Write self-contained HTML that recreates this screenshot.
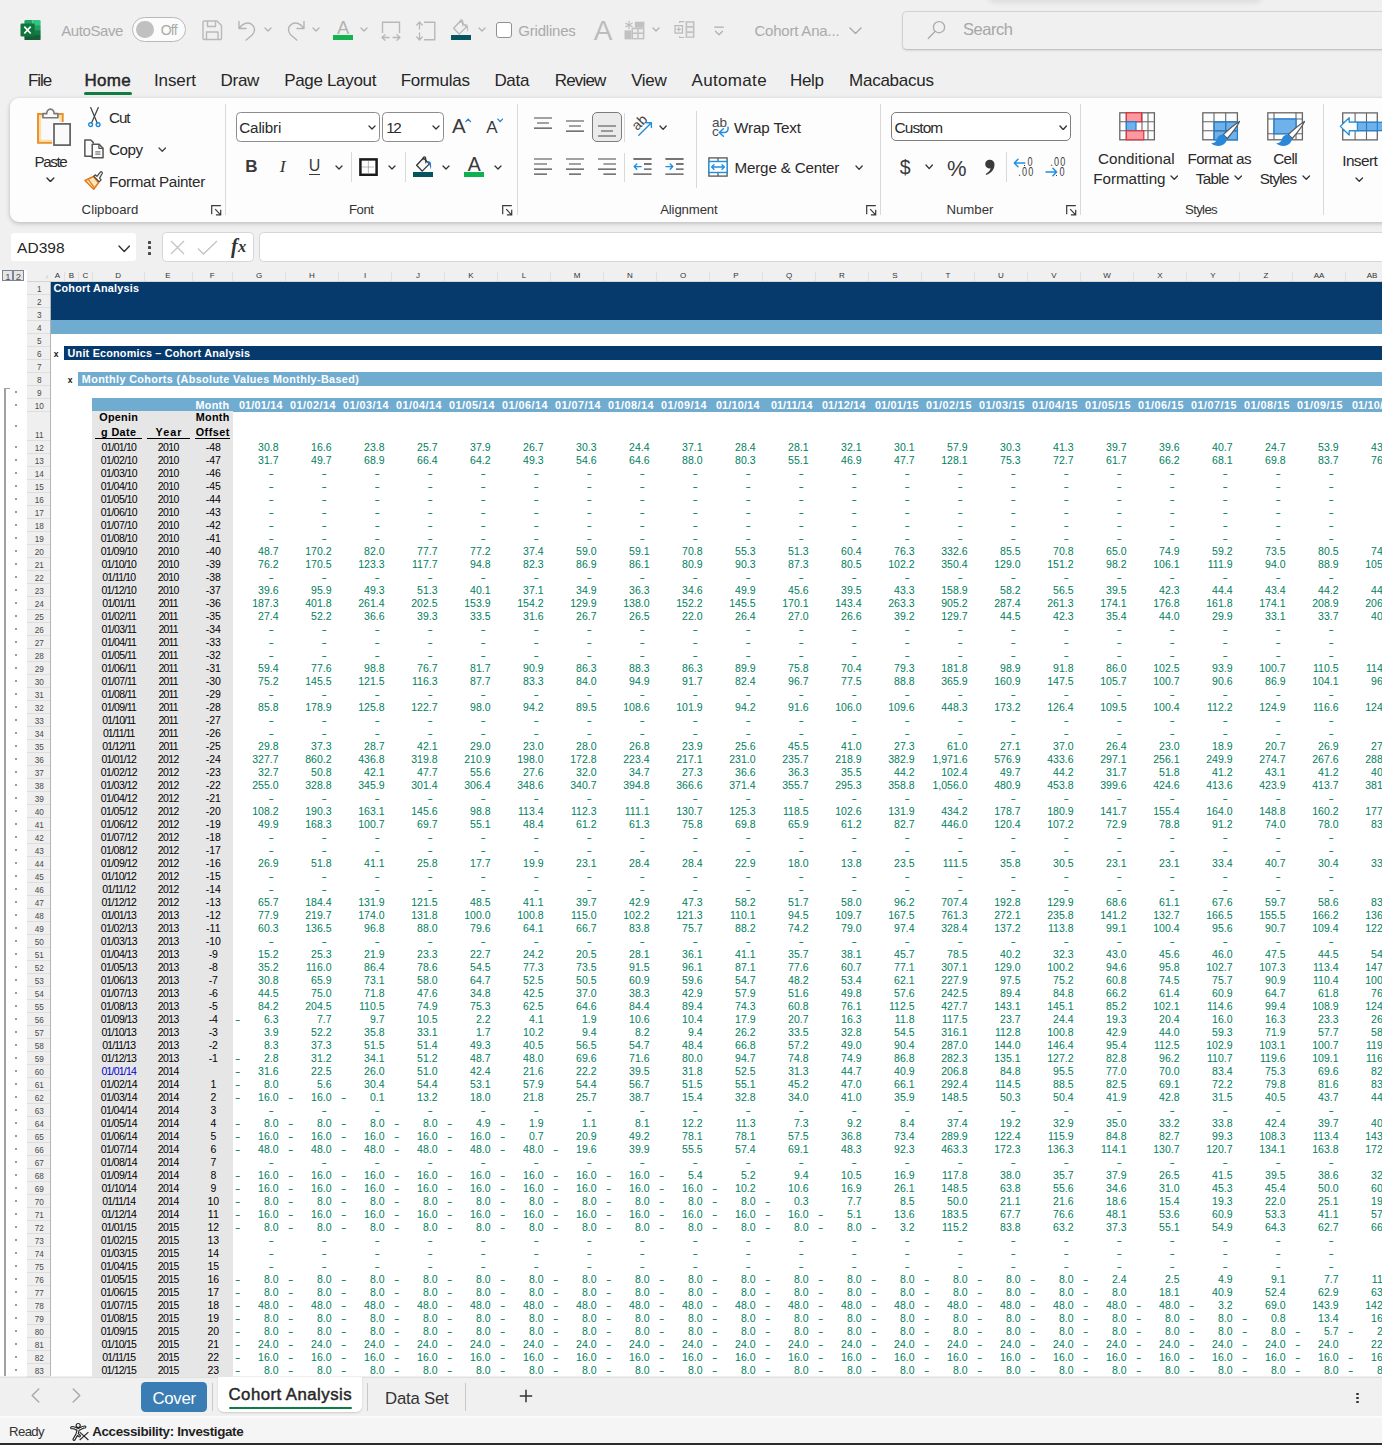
<!DOCTYPE html>
<html lang="en"><head><meta charset="utf-8"><title>Cohort Analysis - Excel</title>
<style>
html,body{margin:0;padding:0}
body{width:1382px;height:1445px;overflow:hidden;position:relative;background:#f0f0f0;font-family:'Liberation Sans',sans-serif;color:#242424}
body>span,body>div,body>svg{position:absolute;white-space:pre}
.g span,.g div,.g svg{position:absolute;white-space:pre}
.g{position:absolute;left:0;top:0}
.row{position:absolute;left:232.5px;height:13px;white-space:nowrap;font-size:10.5px;line-height:13px;color:#00805e}
.row b{display:inline-block;width:53px;box-sizing:border-box;padding-right:7px;text-align:right;font-weight:400;position:relative;vertical-align:top;height:13px}
.row b.d{padding-right:13px;transform:scaleX(1.55);transform-origin:38.3px 50%}
.row b i{position:absolute;left:2.6px;top:0;font-style:normal;transform:scaleX(1.55);transform-origin:0 50%}
.lab{position:absolute;height:13px;font-size:10.5px;line-height:13px;text-align:center;color:#000}
</style></head>
<body>
<div class="g" id="chrome">
<svg style="left:19.5px;top:19.8px;" width="21" height="20.2" viewBox="0 0 21 20.2"><path d="M4.4 1.3A1.3 1.3 0 0 1 5.7 0h6.8v5.1H4.4z" fill="#21a366"/><path d="M12.5 0h6.8a1.3 1.3 0 0 1 1.3 1.3v3.8h-8.1z" fill="#33c481"/><rect x="4.4" y="5.1" width="8.1" height="5" fill="#107c41"/><rect x="12.5" y="5.1" width="8.1" height="5" fill="#21a366"/><rect x="4.4" y="10.1" width="8.1" height="5" fill="#185c37"/><rect x="12.5" y="10.1" width="8.1" height="5" fill="#107c41"/><path d="M4.4 15.1h16.2v3.8a1.3 1.3 0 0 1-1.3 1.3H5.7a1.3 1.3 0 0 1-1.3-1.3z" fill="#185c37"/><rect x="0.5" y="3.5" width="14.2" height="13" rx="1.2" fill="#0e753c"/><path d="M4.3 6.7l6.4 6.8M10.7 6.7l-6.4 6.8" stroke="#fff" stroke-width="1.7" fill="none"/></svg>
<span style="left:61.30px;top:21.00px;font-size:15px;line-height:19px;color:#aaaaaa;letter-spacing:-0.435px;">AutoSave</span>
<div style="left:132.3px;top:17px;width:53.5px;height:24.5px;box-sizing:border-box;border:1.3px solid #b9b9b9;border-radius:12.5px;background:#fbfbfb"></div>
<div style="left:136.2px;top:21.1px;width:17.4px;height:17.4px;border-radius:50%;background:#c0c0c0"></div>
<span style="left:160.70px;top:21.00px;font-size:14px;line-height:18px;color:#aaaaaa;letter-spacing:-0.711px;">Off</span>
<svg style="left:202px;top:19.5px;" width="21" height="21" viewBox="0 0 21 21"><path d="M1 2.2A1.2 1.2 0 0 1 2.2 1H15l4.5 4.5V18.3a1.2 1.2 0 0 1-1.2 1.2H2.2A1.2 1.2 0 0 1 1 18.3z M5.5 1v5.5h8V1 M4.5 19.5v-7.5h11.5v7.5" fill="none" stroke="#b8b8b8" stroke-width="1.4" stroke-linejoin="round"/></svg>
<svg style="left:237px;top:19px;" width="20" height="22" viewBox="0 0 20 22"><path d="M2 2.5v7h7 M2.3 9.2C5 4.5 10.5 2.6 14.6 5.3c3.9 2.6 3.6 7.5 0.8 10.4L9.2 21" fill="none" stroke="#b4b4b4" stroke-width="1.4" stroke-linecap="round" stroke-linejoin="round"/></svg>
<svg style="left:264.4px;top:27.0px;" width="8" height="5" viewBox="0 0 8 5"><path d="M1 1 L4.0 4 L7 1" fill="none" stroke="#b0b0b0" stroke-width="1.2" stroke-linecap="round" stroke-linejoin="round"/></svg>
<svg style="left:286px;top:19px;" width="20" height="22" viewBox="0 0 20 22"><path d="M18 2.5v7h-7 M17.7 9.2C15 4.5 9.5 2.6 5.4 5.3c-3.9 2.6-3.6 7.5-0.8 10.4L10.8 21" fill="none" stroke="#b4b4b4" stroke-width="1.4" stroke-linecap="round" stroke-linejoin="round"/></svg>
<svg style="left:312.2px;top:27.0px;" width="8" height="5" viewBox="0 0 8 5"><path d="M1 1 L4.0 4 L7 1" fill="none" stroke="#b0b0b0" stroke-width="1.2" stroke-linecap="round" stroke-linejoin="round"/></svg>
<span style="left:337.03px;top:16.00px;font-size:18.5px;line-height:23px;color:#b2b2b2;">A</span>
<div style="left:333px;top:35px;width:20px;height:5px;background:#13b24c;"></div>
<svg style="left:360.3px;top:27.0px;" width="8" height="5" viewBox="0 0 8 5"><path d="M1 1 L4.0 4 L7 1" fill="none" stroke="#b0b0b0" stroke-width="1.2" stroke-linecap="round" stroke-linejoin="round"/></svg>
<svg style="left:381px;top:21px;" width="20" height="20" viewBox="0 0 20 20"><path d="M1.5 12V1.2h17V12" fill="none" stroke="#b8b8b8" stroke-width="1.4"/><path d="M1 16.5h7M12 16.5h7M4 13.8l-3 2.7 3 2.7M16 13.8l3 2.7-3 2.7" fill="none" stroke="#b8b8b8" stroke-width="1.3" stroke-linecap="round" stroke-linejoin="round"/></svg>
<svg style="left:416px;top:21px;" width="20" height="20" viewBox="0 0 20 20"><path d="M8 1.2h10.8v17.6H8" fill="none" stroke="#b8b8b8" stroke-width="1.4"/><path d="M3.5 1v7M3.5 12v7M0.8 4l2.7-3 2.7 3M0.8 16l2.7 3 2.7-3" fill="none" stroke="#b8b8b8" stroke-width="1.3" stroke-linecap="round" stroke-linejoin="round"/></svg>
<svg style="left:452.3px;top:18.8px;" width="20" height="16" viewBox="0 0 20 16"><path d="M1.65 9.3L7.2 15.1L14.4 7.9L8.4 2z" fill="none" stroke="#b6b6b6" stroke-width="1.3" stroke-linejoin="round"/><path d="M8 3.6C8 1.5 8.6 0.9 9.4 0.9S10.8 1.6 10.8 3.2V6.8" fill="none" stroke="#b6b6b6" stroke-width="1.2" stroke-linecap="round"/><path d="M12.5 5.7C14 4.8 15.6 5.4 15.9 7.5C16.2 9.5 16.3 11.5 16 13.6C15.3 11 14.6 9 14.2 8z" fill="#bcbcbc"/></svg>
<div style="left:450.7px;top:35px;width:20.3px;height:5px;background:#04555f;"></div>
<svg style="left:478.2px;top:27.0px;" width="8" height="5" viewBox="0 0 8 5"><path d="M1 1 L4.0 4 L7 1" fill="none" stroke="#b0b0b0" stroke-width="1.2" stroke-linecap="round" stroke-linejoin="round"/></svg>
<div style="left:496px;top:22px;width:16px;height:16px;box-sizing:border-box;border:1.3px solid #8f8f8f;border-radius:3px;background:#fff"></div>
<span style="left:518.30px;top:21.00px;font-size:15px;line-height:19px;color:#aaaaaa;letter-spacing:-0.211px;">Gridlines</span>
<span style="left:593.66px;top:14.00px;font-size:28px;line-height:33px;color:#bcbcbc;">A</span>
<svg style="left:623.5px;top:19.5px;" width="21" height="20" viewBox="0 0 21 20"><rect x="10.8" y="1.7" width="9.6" height="6" fill="#c1c1c1"/><rect x="0.5" y="10.4" width="7" height="9" fill="#c1c1c1"/><rect x="7.5" y="7.7" width="12.9" height="11.7" fill="#c1c1c1"/><path d="M9 9.2h4.2v3.4H9zM14.7 9.2h4.2v3.4h-4.2zM9 14.1h4.2v3.8H9zM14.7 14.1h4.2v3.8h-4.2z" fill="#ededed"/><path d="M5 0.8v8.4M1.4 2.9l7.2 4.2M8.6 2.9L1.4 7.1" stroke="#bababa" stroke-width="1.1" fill="none"/></svg>
<svg style="left:652.3px;top:27.0px;" width="8" height="5" viewBox="0 0 8 5"><path d="M1 1 L4.0 4 L7 1" fill="none" stroke="#b0b0b0" stroke-width="1.2" stroke-linecap="round" stroke-linejoin="round"/></svg>
<svg style="left:673.5px;top:21px;" width="21" height="18" viewBox="0 0 21 18"><rect x="11.5" y="0.2" width="9" height="16.6" fill="#c1c1c1"/><path d="M13.2 1.85h5.7v3.25h-5.7zM13.2 6.7h5.7v3.6h-5.7zM13.2 11.9h5.7v3.5h-5.7z" fill="#ededed"/><path d="M5.65 2V0.6H10.3M5.65 15.2v1.3H10.3" fill="none" stroke="#bababa" stroke-width="1.2"/><rect x="1.05" y="4.65" width="7.4" height="7.4" fill="#f0f0f0" stroke="#bababa" stroke-width="1.3"/><path d="M4.75 6.2v4.3M2.6 8.35h4.3" stroke="#bababa" stroke-width="1.2"/></svg>
<svg style="left:713.5px;top:25.5px;" width="10" height="11" viewBox="0 0 10 11"><path d="M0.8 1.2h8.4M1.5 5.2l3.5 3.6 3.5-3.6" fill="none" stroke="#b0b0b0" stroke-width="1.3" stroke-linecap="round" stroke-linejoin="round"/></svg>
<span style="left:754.40px;top:21.00px;font-size:15px;line-height:19px;color:#aaaaaa;letter-spacing:-0.197px;">Cohort Ana...</span>
<svg style="left:848.5px;top:26.75px;" width="13" height="7.5" viewBox="0 0 13 7.5"><path d="M1 1 L6.5 6.5 L12 1" fill="none" stroke="#a8a8a8" stroke-width="1.4" stroke-linecap="round" stroke-linejoin="round"/></svg>
<div style="left:990px;top:-8px;width:270px;height:8px;box-shadow:0 1px 7px rgba(0,0,0,.13)"></div>
<div style="left:902px;top:10.5px;width:520px;height:39px;box-sizing:border-box;border:1.3px solid #d2d2d2;border-bottom-color:#c4c4c4;border-radius:5px;background:#f0f0f0;box-shadow:0 1px 2px rgba(0,0,0,.10)"></div>
<svg style="left:927px;top:20px;" width="20" height="20" viewBox="0 0 20 20"><circle cx="12" cy="7.2" r="5.6" fill="none" stroke="#ababab" stroke-width="1.3"/><path d="M8 11.5L1.2 18.5" stroke="#ababab" stroke-width="1.3" stroke-linecap="round"/></svg>
<span style="left:963.00px;top:19.00px;font-size:16.5px;line-height:20px;color:#a6a6a6;letter-spacing:-0.456px;">Search</span>
<span style="left:27.90px;top:70.00px;font-size:17px;line-height:21px;color:#262626;letter-spacing:-1.035px;">File</span>
<span style="left:84.60px;top:70.00px;font-size:17px;line-height:21px;color:#262626;letter-spacing:0.247px;-webkit-text-stroke:0.45px #262626;">Home</span>
<span style="left:154.00px;top:70.00px;font-size:17px;line-height:21px;color:#262626;letter-spacing:-0.106px;">Insert</span>
<span style="left:220.40px;top:70.00px;font-size:17px;line-height:21px;color:#262626;letter-spacing:-0.224px;">Draw</span>
<span style="left:284.20px;top:70.00px;font-size:17px;line-height:21px;color:#262626;letter-spacing:-0.327px;">Page Layout</span>
<span style="left:400.70px;top:70.00px;font-size:17px;line-height:21px;color:#262626;letter-spacing:-0.223px;">Formulas</span>
<span style="left:494.40px;top:70.00px;font-size:17px;line-height:21px;color:#262626;letter-spacing:-0.307px;">Data</span>
<span style="left:554.70px;top:70.00px;font-size:17px;line-height:21px;color:#262626;letter-spacing:-0.81px;">Review</span>
<span style="left:631.20px;top:70.00px;font-size:17px;line-height:21px;color:#262626;letter-spacing:-0.349px;">View</span>
<span style="left:691.50px;top:70.00px;font-size:17px;line-height:21px;color:#262626;letter-spacing:0.333px;">Automate</span>
<span style="left:790.00px;top:70.00px;font-size:17px;line-height:21px;color:#262626;letter-spacing:-0.323px;">Help</span>
<span style="left:849.00px;top:70.00px;font-size:17px;line-height:21px;color:#262626;letter-spacing:-0.242px;">Macabacus</span>
<div style="left:84.4px;top:92px;width:47.6px;height:3px;border-radius:1.5px;background:#107c41"></div>
<div style="left:10px;top:98px;width:1400px;height:124px;background:#fdfdfd;border-radius:9px;box-shadow:0 1px 4px rgba(0,0,0,.18),0 3px 6px rgba(0,0,0,.06)"></div>
<div style="left:225.1px;top:104px;width:1px;height:111px;background:#d9d9d9;"></div>
<div style="left:517.3px;top:104px;width:1px;height:111px;background:#d9d9d9;"></div>
<div style="left:879.9px;top:104px;width:1px;height:111px;background:#d9d9d9;"></div>
<div style="left:1080.0px;top:104px;width:1px;height:111px;background:#d9d9d9;"></div>
<div style="left:1323.0px;top:104px;width:1px;height:111px;background:#d9d9d9;"></div>
<svg style="left:210.7px;top:204.5px;" width="11" height="11" viewBox="0 0 11 11"><path d="M0.7 9.2V0.7H9.8M4.2 4.2L9.6 9.8M9.7 4.8V9.9H4.9" fill="none" stroke="#3a3a3a" stroke-width="1.2"/></svg>
<svg style="left:502.3px;top:204.5px;" width="11" height="11" viewBox="0 0 11 11"><path d="M0.7 9.2V0.7H9.8M4.2 4.2L9.6 9.8M9.7 4.8V9.9H4.9" fill="none" stroke="#3a3a3a" stroke-width="1.2"/></svg>
<svg style="left:866.2px;top:204.5px;" width="11" height="11" viewBox="0 0 11 11"><path d="M0.7 9.2V0.7H9.8M4.2 4.2L9.6 9.8M9.7 4.8V9.9H4.9" fill="none" stroke="#3a3a3a" stroke-width="1.2"/></svg>
<svg style="left:1066px;top:204.5px;" width="11" height="11" viewBox="0 0 11 11"><path d="M0.7 9.2V0.7H9.8M4.2 4.2L9.6 9.8M9.7 4.8V9.9H4.9" fill="none" stroke="#3a3a3a" stroke-width="1.2"/></svg>
<span style="left:81.60px;top:201.00px;font-size:13.2px;line-height:17px;color:#333;letter-spacing:0.043px;">Clipboard</span>
<span style="left:349.00px;top:201.00px;font-size:13.2px;line-height:17px;color:#333;letter-spacing:-0.464px;">Font</span>
<span style="left:660.20px;top:201.00px;font-size:13.2px;line-height:17px;color:#333;letter-spacing:-0.145px;">Alignment</span>
<span style="left:946.40px;top:201.00px;font-size:13.2px;line-height:17px;color:#333;letter-spacing:0.019px;">Number</span>
<span style="left:1185.00px;top:201.00px;font-size:13.2px;line-height:17px;color:#333;letter-spacing:-0.644px;">Styles</span>
<svg style="left:35px;top:108px;" width="38" height="40" viewBox="0 0 38 40"><rect x="3.15" y="6.1" width="24.45" height="28.6" fill="#f9f9fb" stroke="#e8912d" stroke-width="2.2"/><rect x="5.2" y="8.15" width="20.35" height="24.5" fill="none" stroke="#fbdf9f" stroke-width="1.9"/><path d="M7.95 9.75V5.7H11.7C11.7 3.4 13.1 1.2 15.4 1.2S19.1 3.4 19.1 5.7H22.9V9.75z" fill="#fafafa" stroke="#7a7a7a" stroke-width="1.7" stroke-linejoin="round"/><rect x="19" y="15.9" width="16.1" height="21.2" fill="#fafafa" stroke="#fdfdfd" stroke-width="3.8"/><rect x="19" y="15.9" width="16.1" height="21.2" fill="#fafafa" stroke="#555" stroke-width="1.6"/></svg>
<span style="left:34.60px;top:152.00px;font-size:15.2px;line-height:19px;color:#2a2a2a;letter-spacing:-1.411px;">Paste</span>
<svg style="left:46.0px;top:176.6px;" width="8.8" height="5.6" viewBox="0 0 8.8 5.6"><path d="M1 1 L4.4 4.6 L7.8 1" fill="none" stroke="#3a3a3a" stroke-width="1.5" stroke-linecap="round" stroke-linejoin="round"/></svg>
<svg style="left:85.5px;top:107px;" width="17" height="21" viewBox="0 0 17 21"><path d="M4.7 0.6L11.2 16M12.3 0.6L5.5 16" stroke="#444" stroke-width="1.25" fill="none" stroke-linecap="round"/><circle cx="4.6" cy="17.6" r="1.9" fill="none" stroke="#1e8bdc" stroke-width="1.4"/><circle cx="12.1" cy="17.6" r="1.9" fill="none" stroke="#1e8bdc" stroke-width="1.4"/></svg>
<span style="left:109.00px;top:108.00px;font-size:15.2px;line-height:19px;color:#2a2a2a;letter-spacing:-1.02px;">Cut</span>
<svg style="left:83px;top:139px;" width="22" height="20" viewBox="0 0 22 20"><path d="M9 17.2H1.85V1.05H7.8L10.4 3.6V4.6" fill="#fbfbfb" stroke="#555" stroke-width="1.5" stroke-linejoin="round"/><path d="M9.25 5.15H15.9L20.05 9.3V18.85H9.25z" fill="#fbfbfb" stroke="#555" stroke-width="1.5" stroke-linejoin="round"/><path d="M15.9 5.15V9.3H20.05" fill="none" stroke="#555" stroke-width="1.3" stroke-linejoin="round"/><path d="M12.3 12.9h5.1M12.3 15.2h5.1" stroke="#777" stroke-width="1.3"/></svg>
<span style="left:109.00px;top:140.00px;font-size:15.2px;line-height:19px;color:#2a2a2a;letter-spacing:-0.423px;">Copy</span>
<svg style="left:157.75px;top:147.35px;" width="8.5" height="5.3" viewBox="0 0 8.5 5.3"><path d="M1 1 L4.25 4.3 L7.5 1" fill="none" stroke="#444" stroke-width="1.3" stroke-linecap="round" stroke-linejoin="round"/></svg>
<svg style="left:83.5px;top:171px;" width="21" height="19" viewBox="0 0 21 19"><path d="M1 9.5l8.5-4 5 6.2-4.8 6.5z" fill="#fbe6b8" stroke="#e07a1a" stroke-width="1.5" stroke-linejoin="round"/><path d="M4.3 8.3l6 8.3" stroke="#e07a1a" stroke-width="1.2"/><path d="M9.8 5.2l1.7-1.4 1.5 1.6 3.3-4.3c0.9-0.9 2.5 0.2 1.9 1.4l-2.6 4.6 1.5 1.8-1.9 1.9z" fill="#fafafa" stroke="#444" stroke-width="1.2" stroke-linejoin="round"/></svg>
<span style="left:109.00px;top:172.00px;font-size:15.2px;line-height:19px;color:#2a2a2a;letter-spacing:-0.327px;">Format Painter</span>
<div style="left:236.3px;top:112px;width:143.8px;height:30px;box-sizing:border-box;border:1.2px solid #8d8d8d;border-radius:4.5px;background:#fff"></div>
<span style="left:239.30px;top:118.00px;font-size:15.2px;line-height:19px;color:#2a2a2a;letter-spacing:-0.158px;">Calibri</span>
<svg style="left:368.0px;top:125.0px;" width="8" height="5" viewBox="0 0 8 5"><path d="M1 1 L4.0 4 L7 1" fill="none" stroke="#333" stroke-width="1.3" stroke-linecap="round" stroke-linejoin="round"/></svg>
<div style="left:382.2px;top:112px;width:61.4px;height:30px;box-sizing:border-box;border:1.2px solid #8d8d8d;border-radius:4.5px;background:#fff"></div>
<span style="left:386.20px;top:118.00px;font-size:15.2px;line-height:19px;color:#2a2a2a;letter-spacing:-1.306px;">12</span>
<svg style="left:432.0px;top:125.0px;" width="8" height="5" viewBox="0 0 8 5"><path d="M1 1 L4.0 4 L7 1" fill="none" stroke="#333" stroke-width="1.3" stroke-linecap="round" stroke-linejoin="round"/></svg>
<span style="left:451.96px;top:113.00px;font-size:20.5px;line-height:25px;color:#3a3a3a;">A</span>
<svg style="left:465.3px;top:118px;" width="6.4" height="4.6" viewBox="0 0 6.4 4.6"><path d="M0.9 3.6L3.2 1.1 5.5 3.6" fill="none" stroke="#1f7fd1" stroke-width="1.3" stroke-linecap="round" stroke-linejoin="round"/></svg>
<span style="left:486.13px;top:117.00px;font-size:17px;line-height:21px;color:#3a3a3a;">A</span>
<svg style="left:497.2px;top:118px;" width="6.4" height="4.6" viewBox="0 0 6.4 4.6"><path d="M0.9 1.1L3.2 3.6 5.5 1.1" fill="none" stroke="#1f7fd1" stroke-width="1.3" stroke-linecap="round" stroke-linejoin="round"/></svg>
<span style="left:245.36px;top:156.00px;font-size:17px;line-height:21px;font-weight:700;color:#3a3a3a;">B</span>
<span style="left:279.86px;top:155.00px;font-size:17.5px;line-height:22px;font-style:italic;color:#333;font-family:'Liberation Serif',serif;">I</span>
<span style="left:308.72px;top:156.00px;font-size:16px;line-height:19px;color:#3a3a3a;">U</span>
<div style="left:309px;top:173.6px;width:11px;height:1.2px;background:#3a3a3a;"></div>
<svg style="left:334.5px;top:165.0px;" width="8" height="5" viewBox="0 0 8 5"><path d="M1 1 L4.0 4 L7 1" fill="none" stroke="#333" stroke-width="1.3" stroke-linecap="round" stroke-linejoin="round"/></svg>
<div style="left:350.5px;top:152px;width:1px;height:29.5px;background:#d9d9d9;"></div>
<svg style="left:359px;top:157.5px;" width="19" height="18" viewBox="0 0 19 18"><rect x="1.4" y="1.4" width="16.2" height="15.4" fill="#fff" stroke="#1a1a1a" stroke-width="2.5"/><path d="M9.4 3.5v11M3.5 9h12" stroke="#777" stroke-width="1" stroke-dasharray="1 1"/></svg>
<svg style="left:388.0px;top:165.0px;" width="8" height="5" viewBox="0 0 8 5"><path d="M1 1 L4.0 4 L7 1" fill="none" stroke="#333" stroke-width="1.3" stroke-linecap="round" stroke-linejoin="round"/></svg>
<div style="left:404.7px;top:152px;width:1px;height:29.5px;background:#d9d9d9;"></div>
<svg style="left:414.5px;top:156px;" width="20" height="16" viewBox="0 0 20 16"><path d="M1.65 9.3L7.2 15.1L14.4 7.9L8.4 2z" fill="#f8f8f8" stroke="#333" stroke-width="1.3" stroke-linejoin="round"/><path d="M8 3.6C8 1.5 8.6 0.9 9.4 0.9S10.8 1.6 10.8 3.2V6.8" fill="none" stroke="#333" stroke-width="1.2" stroke-linecap="round"/><path d="M12.5 5.7C14 4.8 15.6 5.4 15.9 7.5C16.2 9.5 16.3 11.5 16 13.6C15.3 11 14.6 9 14.2 8z" fill="#1a73cf"/></svg>
<div style="left:413px;top:172.1px;width:20px;height:4.8px;background:#04555f;"></div>
<svg style="left:442.0px;top:165.0px;" width="8" height="5" viewBox="0 0 8 5"><path d="M1 1 L4.0 4 L7 1" fill="none" stroke="#333" stroke-width="1.3" stroke-linecap="round" stroke-linejoin="round"/></svg>
<span style="left:467.69px;top:152.00px;font-size:19.5px;line-height:24px;color:#3a3a3a;">A</span>
<div style="left:463.8px;top:172.1px;width:20.2px;height:4.8px;background:#0fb050;"></div>
<svg style="left:493.5px;top:165.0px;" width="8" height="5" viewBox="0 0 8 5"><path d="M1 1 L4.0 4 L7 1" fill="none" stroke="#333" stroke-width="1.3" stroke-linecap="round" stroke-linejoin="round"/></svg>
<svg style="left:533.8px;top:116.7px;" width="18" height="12.1" viewBox="0 0 18 12.1"><path d="M0.0 1.0h18M3.0 6.0h12M0.0 11.1h18" stroke="#484848" stroke-width="1.2" fill="none"/></svg>
<svg style="left:566.1px;top:120.2px;" width="18" height="12.1" viewBox="0 0 18 12.1"><path d="M0.0 1.0h18M3.0 6.0h12M0.0 11.1h18" stroke="#484848" stroke-width="1.2" fill="none"/></svg>
<div style="left:592.1px;top:112.2px;width:29.8px;height:29.5px;box-sizing:border-box;border:1.1px solid #7c7c7c;border-radius:5px;background:#ebebeb"></div>
<svg style="left:598.1px;top:125.3px;" width="18" height="12.0" viewBox="0 0 18 12.0"><path d="M0.0 1.0h18M3.0 6.0h12M0.0 11.0h18" stroke="#484848" stroke-width="1.2" fill="none"/></svg>
<div style="left:623.9px;top:112.6px;width:1px;height:29.099999999999994px;background:#d9d9d9;"></div>
<span style="left:631.51px;top:113.00px;font-size:14px;line-height:18px;color:#444;transform:rotate(-45deg);transform-origin:50% 55%;">ab</span>
<svg style="left:637px;top:121px;" width="16" height="16" viewBox="0 0 16 16"><path d="M1.8 14.3L14.4 1.7M9.6 1.7h4.8v4.8" fill="none" stroke="#1f8fe0" stroke-width="1.4" stroke-linecap="round" stroke-linejoin="round"/></svg>
<svg style="left:659.1999999999999px;top:124.7px;" width="8.2" height="5.4" viewBox="0 0 8.2 5.4"><path d="M1 1 L4.1 4.4 L7.2 1" fill="none" stroke="#333" stroke-width="1.3" stroke-linecap="round" stroke-linejoin="round"/></svg>
<div style="left:696.1px;top:111px;width:1px;height:77px;background:#d9d9d9;"></div>
<span style="left:711.90px;top:114.00px;font-size:13.5px;line-height:17px;color:#4a4a4a;">ab</span>
<span style="left:712.10px;top:123.00px;font-size:13.5px;line-height:17px;color:#4a4a4a;">c</span>
<svg style="left:718px;top:126px;" width="13" height="12" viewBox="0 0 13 12"><path d="M1.2 6.5H6.6C9.4 6.4 10.6 4.2 10 1.2M5.4 2.7L1.2 6.5l4.2 3.8" fill="none" stroke="#1f8fe0" stroke-width="1.5" stroke-linecap="round" stroke-linejoin="round"/></svg>
<span style="left:734.10px;top:118.00px;font-size:15.2px;line-height:19px;color:#2a2a2a;letter-spacing:-0.127px;">Wrap Text</span>
<svg style="left:533.8px;top:157.8px;" width="18" height="17.15" viewBox="0 0 18 17.15"><path d="M0.0 1.0h18M0.0 6.0h13M0.0 11.1h18M0.0 16.1h13" stroke="#484848" stroke-width="1.2" fill="none"/></svg>
<svg style="left:566.1px;top:157.8px;" width="18" height="17.15" viewBox="0 0 18 17.15"><path d="M0.0 1.0h18M3.0 6.0h12M0.0 11.1h18M3.0 16.1h12" stroke="#484848" stroke-width="1.2" fill="none"/></svg>
<svg style="left:598.1px;top:157.8px;" width="18" height="17.15" viewBox="0 0 18 17.15"><path d="M0.0 1.0h18M5.4 6.0h12.6M0.0 11.1h18M5.4 16.1h12.6" stroke="#484848" stroke-width="1.2" fill="none"/></svg>
<div style="left:623.9px;top:152.5px;width:1px;height:29.099999999999994px;background:#d9d9d9;"></div>
<svg style="left:632.5px;top:157.8px;" width="19" height="17" viewBox="0 0 19 17"><path d="M0.4 1h18.2M11 6h7.6M11 11.1h7.6M0.4 16.2h18.2" stroke="#484848" stroke-width="1.3" fill="none"/><path d="M8.2 8.6H1.2M3.8 6L1.2 8.6l2.6 2.6" fill="none" stroke="#1f8fe0" stroke-width="1.4" stroke-linecap="round" stroke-linejoin="round"/></svg>
<svg style="left:664.5px;top:157.8px;" width="19" height="17" viewBox="0 0 19 17"><path d="M0.4 1h18.2M11 6h7.6M11 11.1h7.6M0.4 16.2h18.2" stroke="#484848" stroke-width="1.3" fill="none"/><path d="M0.9 8.6H7.8M5.2 6L7.8 8.6 5.2 11.2" fill="none" stroke="#1f8fe0" stroke-width="1.4" stroke-linecap="round" stroke-linejoin="round"/></svg>
<svg style="left:708.4px;top:156.6px;" width="20" height="20" viewBox="0 0 20 20"><rect x="0.9" y="0.9" width="18.2" height="18.2" fill="#fdfdfd" stroke="#555" stroke-width="1.3"/><path d="M10 0.9v3.6M10 15.5v3.6" stroke="#555" stroke-width="1.2"/><rect x="0.9" y="4.5" width="18.2" height="11" fill="#fff" stroke="#1f8fe0" stroke-width="1.4"/><path d="M3.6 10h12.8M6 7.7L3.6 10 6 12.3M14 7.7l2.4 2.3-2.4 2.3" fill="none" stroke="#1f8fe0" stroke-width="1.4" stroke-linecap="round" stroke-linejoin="round"/></svg>
<span style="left:734.50px;top:158.00px;font-size:15.2px;line-height:19px;color:#2a2a2a;letter-spacing:-0.177px;">Merge &amp; Center</span>
<svg style="left:855.4px;top:164.9px;" width="8.2" height="5.4" viewBox="0 0 8.2 5.4"><path d="M1 1 L4.1 4.4 L7.2 1" fill="none" stroke="#333" stroke-width="1.3" stroke-linecap="round" stroke-linejoin="round"/></svg>
<div style="left:891.1px;top:111.9px;width:179.6px;height:29.6px;box-sizing:border-box;border:1.1px solid #7e7e7e;border-radius:5px;background:#fff"></div>
<span style="left:894.60px;top:118.00px;font-size:15.4px;line-height:19px;color:#2a2a2a;letter-spacing:-0.886px;">Custom</span>
<svg style="left:1059.0px;top:124.7px;" width="8.4" height="5.6" viewBox="0 0 8.4 5.6"><path d="M1 1 L4.2 4.6 L7.4 1" fill="none" stroke="#333" stroke-width="1.4" stroke-linecap="round" stroke-linejoin="round"/></svg>
<span style="left:899.87px;top:155.00px;font-size:19.5px;line-height:24px;color:#3a3a3a;">$</span>
<svg style="left:924.9px;top:164.39999999999998px;" width="8.4" height="5.6" viewBox="0 0 8.4 5.6"><path d="M1 1 L4.2 4.6 L7.4 1" fill="none" stroke="#333" stroke-width="1.3" stroke-linecap="round" stroke-linejoin="round"/></svg>
<span style="left:947.02px;top:155.00px;font-size:22px;line-height:27px;color:#3a3a3a;">%</span>
<svg style="left:984px;top:159px;" width="12" height="17" viewBox="0 0 12 17"><path d="M5.6 0.8a4.6 4.6 0 0 1 4.9 4.7c0 5-3.4 8.6-8.3 10.4l-0.5-1c3-1.6 4.6-3.6 4.9-5.6A4.3 4.3 0 0 1 1.2 5 4.3 4.3 0 0 1 5.6 0.8z" fill="#3a3a3a"/></svg>
<div style="left:1005.8px;top:152px;width:1px;height:29.69999999999999px;background:#d9d9d9;"></div>
<span style="left:1026.21px;top:154.00px;font-size:12px;line-height:16px;color:#3d3d3d;transform:scaleX(.76);transform-origin:100% 50%;">0</span>
<span style="left:1012.90px;top:164.00px;font-size:12px;line-height:16px;color:#3d3d3d;letter-spacing:1.656px;transform:scaleX(.76);transform-origin:100% 50%;">.00</span>
<div style="left:1023.9px;top:164.5px;width:1.3px;height:1.4px;background:#3d3d3d;"></div>
<svg style="left:1013.3px;top:157.8px;" width="13" height="10" viewBox="0 0 13 10"><path d="M11.8 5H1.3M5 1.3L1.3 5l3.7 3.7" fill="none" stroke="#1f8fe0" stroke-width="1.5" stroke-linecap="round" stroke-linejoin="round"/></svg>
<span style="left:1045.00px;top:154.00px;font-size:12px;line-height:16px;color:#3d3d3d;letter-spacing:1.656px;transform:scaleX(.76);transform-origin:100% 50%;">.00</span>
<span style="left:1058.31px;top:164.00px;font-size:12px;line-height:16px;color:#3d3d3d;transform:scaleX(.76);transform-origin:100% 50%;">0</span>
<div style="left:1056px;top:174.5px;width:1.3px;height:1.4px;background:#3d3d3d;"></div>
<svg style="left:1045.2px;top:166.5px;" width="13" height="10" viewBox="0 0 13 10"><path d="M1 5h10.6M7.9 1.3L11.6 5l-3.7 3.7" fill="none" stroke="#1f8fe0" stroke-width="1.5" stroke-linecap="round" stroke-linejoin="round"/></svg>
<svg style="left:1119px;top:111.5px;" width="36.5" height="29" viewBox="0 0 36.5 29"><rect x="0.8" y="0.8" width="34.6" height="27" fill="#fdfdfd" stroke="#666" stroke-width="1.3"/><path d="M0.8 9.8h34.6M0.8 18.8h34.6M7.3 0.8v27M23 0.8v27M29 0.8v27" stroke="#666" stroke-width="1.1"/><rect x="7.3" y="0.8" width="15.2" height="9" fill="#f99aa3" stroke="#e0303a" stroke-width="1.2"/><rect x="7.3" y="9.8" width="9.7" height="9" fill="#6fb1e8" stroke="#1f7fd1" stroke-width="1.2"/><rect x="7.3" y="18.8" width="17.5" height="9" fill="#f99aa3" stroke="#e0303a" stroke-width="1.2"/></svg>
<span style="left:1098.00px;top:149.00px;font-size:15.2px;line-height:19px;color:#2a2a2a;letter-spacing:0.06px;">Conditional</span>
<span style="left:1093.30px;top:169.00px;font-size:15.2px;line-height:19px;color:#2a2a2a;letter-spacing:-0.044px;">Formatting</span>
<svg style="left:1169.95px;top:175.35px;" width="8.5" height="5.3" viewBox="0 0 8.5 5.3"><path d="M1 1 L4.25 4.3 L7.5 1" fill="none" stroke="#333" stroke-width="1.3" stroke-linecap="round" stroke-linejoin="round"/></svg>
<svg style="left:1202px;top:111.5px;" width="38" height="36" viewBox="0 0 38 36"><rect x="0.8" y="0.8" width="34.6" height="27" fill="#fdfdfd" stroke="#666" stroke-width="1.3"/><rect x="12" y="9.8" width="23.4" height="18" fill="#6fb1e8"/><path d="M0.8 9.8h34.6M0.8 18.8h34.6M12 0.8v27M23.7 0.8v27" stroke="#666" stroke-width="1.1"/><path d="M12 9.8h23.4v18H12z M12 18.8h23.4M23.7 9.8v18" fill="none" stroke="#1f7fd1" stroke-width="1.2"/><path d="M37.6 9.4C33 12 25.5 18.5 21.3 22.7L25.3 26.5C29.5 21.5 35 14.5 37.6 9.4z" fill="#fdfdfd" stroke="#555" stroke-width="1.2" stroke-linejoin="round"/><path d="M21.1 22.8C17 22.4 15.5 25 14.8 27.5C14 30 12 31.2 9.2 31.2C13 34.9 20.5 34.9 23.6 30.5C24.6 29 25.3 27.8 25.3 26.6z" fill="#2b88d8"/></svg>
<span style="left:1187.40px;top:149.00px;font-size:15.2px;line-height:19px;color:#2a2a2a;letter-spacing:-0.532px;">Format as</span>
<span style="left:1195.80px;top:169.00px;font-size:15.2px;line-height:19px;color:#2a2a2a;letter-spacing:-0.678px;">Table</span>
<svg style="left:1233.75px;top:175.35px;" width="8.5" height="5.3" viewBox="0 0 8.5 5.3"><path d="M1 1 L4.25 4.3 L7.5 1" fill="none" stroke="#333" stroke-width="1.3" stroke-linecap="round" stroke-linejoin="round"/></svg>
<svg style="left:1267px;top:111.5px;" width="38" height="36" viewBox="0 0 38 36"><rect x="0.8" y="0.8" width="34.6" height="27" fill="#fdfdfd" stroke="#666" stroke-width="1.3"/><path d="M0.8 7h34.6M0.8 21.8h34.6M7 0.8v27M29 0.8v27" stroke="#666" stroke-width="1.1"/><rect x="7" y="7" width="22" height="14.8" fill="#6fb1e8" stroke="#1f7fd1" stroke-width="1.3"/><path d="M37.6 9.4C33 12 25.5 18.5 21.3 22.7L25.3 26.5C29.5 21.5 35 14.5 37.6 9.4z" fill="#fdfdfd" stroke="#555" stroke-width="1.2" stroke-linejoin="round"/><path d="M21.1 22.8C17 22.4 15.5 25 14.8 27.5C14 30 12 31.2 9.2 31.2C13 34.9 20.5 34.9 23.6 30.5C24.6 29 25.3 27.8 25.3 26.6z" fill="#2b88d8"/></svg>
<span style="left:1273.20px;top:149.00px;font-size:15.2px;line-height:19px;color:#2a2a2a;letter-spacing:-0.557px;">Cell</span>
<span style="left:1259.70px;top:169.00px;font-size:15.2px;line-height:19px;color:#2a2a2a;letter-spacing:-0.812px;">Styles</span>
<svg style="left:1301.55px;top:175.35px;" width="8.5" height="5.3" viewBox="0 0 8.5 5.3"><path d="M1 1 L4.25 4.3 L7.5 1" fill="none" stroke="#333" stroke-width="1.3" stroke-linecap="round" stroke-linejoin="round"/></svg>
<svg style="left:1339px;top:111.5px;" width="44" height="29" viewBox="0 0 44 29"><rect x="3.7" y="0.9" width="34.6" height="27" fill="#fdfdfd" stroke="#666" stroke-width="1.3"/><path d="M3.7 10.2h34.6M3.7 18.7h34.6M16.1 0.9v27M27.5 0.9v27" stroke="#666" stroke-width="1.1"/><rect x="17.8" y="10.2" width="27" height="8.5" fill="#6fb1e8" stroke="#1f7fd1" stroke-width="1.2"/><path d="M27.5 10.2v8.5M38.3 10.2v8.5" stroke="#1f7fd1" stroke-width="1.1"/><path d="M1.3 14.4L10.2 5.8V10.2H18.4V18.7H10.2V23z" fill="#fdfdfd" stroke="#1f8fe0" stroke-width="1.3" stroke-linejoin="round"/></svg>
<span style="left:1342.20px;top:151.00px;font-size:15.4px;line-height:19px;color:#2a2a2a;letter-spacing:-0.58px;">Insert</span>
<svg style="left:1355.15px;top:176.85px;" width="8.5" height="5.3" viewBox="0 0 8.5 5.3"><path d="M1 1 L4.25 4.3 L7.5 1" fill="none" stroke="#333" stroke-width="1.3" stroke-linecap="round" stroke-linejoin="round"/></svg>
<div style="left:10.9px;top:232.8px;width:125.4px;height:27.8px;background:#fff;border-radius:3px;"></div>
<span style="left:17.00px;top:238.00px;font-size:15.5px;line-height:19px;color:#262626;letter-spacing:0.073px;">AD398</span>
<svg style="left:117.55px;top:245.0px;" width="12.5" height="7.6" viewBox="0 0 12.5 7.6"><path d="M1 1 L6.25 6.6 L11.5 1" fill="none" stroke="#333" stroke-width="1.4" stroke-linecap="round" stroke-linejoin="round"/></svg>
<div style="left:147.9px;top:240.8px;width:3px;height:3px;background:#4a4a4a;border-radius:0.6px;"></div>
<div style="left:147.9px;top:246.3px;width:3px;height:3px;background:#4a4a4a;border-radius:0.6px;"></div>
<div style="left:147.9px;top:251.8px;width:3px;height:3px;background:#4a4a4a;border-radius:0.6px;"></div>
<div style="left:162.3px;top:232px;width:91.4px;height:29.8px;box-sizing:border-box;border:1px solid #d6d6d6;border-radius:4.5px;background:#fff"></div>
<svg style="left:170px;top:239.5px;" width="15" height="15" viewBox="0 0 15 15"><path d="M1 1l13 13M14 1L1 14" stroke="#c3c3c3" stroke-width="1.3" fill="none"/></svg>
<svg style="left:197px;top:240px;" width="21" height="15" viewBox="0 0 21 15"><path d="M1 8.5l5.5 5.5L20 1" stroke="#c3c3c3" stroke-width="1.3" fill="none"/></svg>
<span style="left:230.96px;top:234.00px;font-size:20px;line-height:24px;font-weight:700;font-style:italic;color:#333;font-family:'Liberation Serif',serif;">f</span>
<span style="left:238.01px;top:237.00px;font-size:16.5px;line-height:20px;font-weight:700;font-style:italic;color:#333;font-family:'Liberation Serif',serif;">x</span>
<div style="left:259.4px;top:232px;width:1140px;height:29.8px;box-sizing:border-box;border:1px solid #d6d6d6;border-radius:4.5px;background:#fff"></div>
<div style="left:0px;top:1376.5px;width:1382px;height:40.3px;background:#f0f0f0;"></div>
<div style="left:0px;top:1376.5px;width:1382px;height:0.8px;background:#e0e0e0;"></div>
<svg style="left:31px;top:1388px;" width="9" height="15" viewBox="0 0 9 15"><path d="M7.8 1L1.2 7.5l6.6 6.5" fill="none" stroke="#a8a8a8" stroke-width="1.4" stroke-linecap="round" stroke-linejoin="round"/></svg>
<svg style="left:71.5px;top:1388px;" width="9" height="15" viewBox="0 0 9 15"><path d="M1.2 1l6.6 6.5L1.2 14" fill="none" stroke="#a8a8a8" stroke-width="1.4" stroke-linecap="round" stroke-linejoin="round"/></svg>
<div style="left:140.8px;top:1382.2px;width:66px;height:29.4px;border-radius:4.5px;background:#3a7db5"></div>
<span style="left:152.50px;top:1388.00px;font-size:16.8px;line-height:21px;color:#fff;letter-spacing:-0.316px;">Cover</span>
<div style="left:212.3px;top:1383px;width:1px;height:28px;background:#c8c8c8;"></div>
<div style="left:217.8px;top:1377.2px;width:144.4px;height:34.4px;border-radius:0 0 6px 6px;background:#fff;box-shadow:0 1px 2px rgba(0,0,0,.15)"></div>
<span style="left:228.50px;top:1384.00px;font-size:16.8px;line-height:21px;color:#262626;letter-spacing:0.465px;-webkit-text-stroke:0.45px #262626;">Cohort Analysis</span>
<div style="left:228.5px;top:1406.5px;width:123.1px;height:2.2px;background:#107c41;border-radius:1px;"></div>
<div style="left:366.8px;top:1383px;width:1px;height:28px;background:#c8c8c8;"></div>
<span style="left:385.00px;top:1388.00px;font-size:16.8px;line-height:21px;color:#333;letter-spacing:-0.216px;">Data Set</span>
<div style="left:464.5px;top:1383px;width:1px;height:28px;background:#c8c8c8;"></div>
<svg style="left:518.5px;top:1388.5px;" width="14" height="14" viewBox="0 0 14 14"><path d="M7 0.8v12.4M0.8 7h12.4" stroke="#333" stroke-width="1.5" fill="none"/></svg>
<div style="left:1356.3px;top:1392.5px;width:2.4px;height:2.4px;background:#333;border-radius:50%;"></div>
<div style="left:1356.3px;top:1396.8px;width:2.4px;height:2.4px;background:#333;border-radius:50%;"></div>
<div style="left:1356.3px;top:1401.1px;width:2.4px;height:2.4px;background:#333;border-radius:50%;"></div>
<div style="left:0px;top:1417px;width:1382px;height:28px;background:#f5f5f5;"></div>
<div style="left:0px;top:1416.4px;width:1382px;height:1.4px;background:#fbfbfb;"></div>
<span style="left:9.10px;top:1423.00px;font-size:13.2px;line-height:17px;color:#333;letter-spacing:-0.656px;">Ready</span>
<svg style="left:69.5px;top:1421.5px;" width="20" height="20" viewBox="0 0 20 20"><path d="M1.7 5.7C3.6 5.1 6 6.6 8.2 7.7C10.5 6.6 13 4.7 14.8 5M8.2 7.7L7.1 12L4.1 17.3M7.1 12L9.3 13.7" fill="none" stroke="#262626" stroke-width="3.2" stroke-linecap="round" stroke-linejoin="round"/><circle cx="8.2" cy="3.5" r="2.6" fill="#262626"/><path d="M1.7 5.7C3.6 5.1 6 6.6 8.2 7.7C10.5 6.6 13 4.7 14.8 5M8.2 7.7L7.1 12L4.1 17.3M7.1 12L9.3 13.7" fill="none" stroke="#f5f5f5" stroke-width="1" stroke-linecap="round" stroke-linejoin="round"/><circle cx="8.2" cy="3.5" r="1.4" fill="#f5f5f5"/><path d="M9.7 10.1L18.4 18M18.4 10.1L9.7 18" stroke="#262626" stroke-width="1.1" fill="none"/></svg>
<span style="left:92.20px;top:1423.00px;font-size:13.4px;line-height:17px;font-weight:700;color:#1f1f1f;letter-spacing:-0.341px;">Accessibility: Investigate</span>
<div style="left:0px;top:1443.4px;width:1382px;height:1.6px;background:#2e2a2a;"></div>
</div>
<div class="g" id="sheet">
<div style="left:50.5px;top:281.8px;width:1331.5px;height:1094.7px;background:#fff;"></div>
<div style="left:0px;top:269.6px;width:27.1px;height:1106.9px;background:#fff;"></div>
<div style="left:27.3px;top:281.8px;width:23.2px;height:1094.7px;background:#efefef;"></div>
<div style="left:49.9px;top:281.8px;width:1px;height:1094.7px;background:#b4b4b4;"></div>
<div style="left:27.3px;top:281.3px;width:1354.7px;height:0.8px;background:#d4d4d4;"></div>
<div style="left:2px;top:270.2px;width:11.2px;height:10.6px;box-sizing:border-box;border:1px solid #7d8595;background:#e6e6e6"></div>
<div style="left:12.6px;top:270.2px;width:11.2px;height:10.6px;box-sizing:border-box;border:1px solid #7d8595;background:#e6e6e6"></div>
<span style="left:5.15px;top:270.00px;font-size:9.5px;line-height:13px;color:#555;">1</span>
<span style="left:15.75px;top:270.00px;font-size:9.5px;line-height:13px;color:#555;">2</span>
<svg style="left:43.5px;top:274.2px;" width="5" height="5" viewBox="0 0 5 5"><path d="M4.2 0.3 L4.2 4.2 L0.3 4.2 Z" fill="#dedede"/></svg>
<span style="left:54.83px;top:270.00px;font-size:8px;line-height:11px;color:#333;">A</span>
<div style="left:64.1px;top:271.5px;width:0.8px;height:9.5px;background:#e0e0e0;"></div>
<span style="left:68.83px;top:270.00px;font-size:8px;line-height:11px;color:#333;">B</span>
<div style="left:78.1px;top:271.5px;width:0.8px;height:9.5px;background:#e0e0e0;"></div>
<span style="left:82.61px;top:270.00px;font-size:8px;line-height:11px;color:#333;">C</span>
<div style="left:92.1px;top:271.5px;width:0.8px;height:9.5px;background:#e0e0e0;"></div>
<span style="left:115.36px;top:270.00px;font-size:8px;line-height:11px;color:#333;">D</span>
<div style="left:143.6px;top:271.5px;width:0.8px;height:9.5px;background:#e0e0e0;"></div>
<span style="left:165.33px;top:270.00px;font-size:8px;line-height:11px;color:#333;">E</span>
<div style="left:191.6px;top:271.5px;width:0.8px;height:9.5px;background:#e0e0e0;"></div>
<span style="left:209.80px;top:270.00px;font-size:8px;line-height:11px;color:#333;">F</span>
<div style="left:232.1px;top:271.5px;width:0.8px;height:9.5px;background:#e0e0e0;"></div>
<span style="left:255.88px;top:270.00px;font-size:8px;line-height:11px;color:#333;">G</span>
<div style="left:285.1px;top:271.5px;width:0.8px;height:9.5px;background:#e0e0e0;"></div>
<span style="left:309.11px;top:270.00px;font-size:8px;line-height:11px;color:#333;">H</span>
<div style="left:338.1px;top:271.5px;width:0.8px;height:9.5px;background:#e0e0e0;"></div>
<span style="left:363.88px;top:270.00px;font-size:8px;line-height:11px;color:#333;">I</span>
<div style="left:391.1px;top:271.5px;width:0.8px;height:9.5px;background:#e0e0e0;"></div>
<span style="left:416.00px;top:270.00px;font-size:8px;line-height:11px;color:#333;">J</span>
<div style="left:444.1px;top:271.5px;width:0.8px;height:9.5px;background:#e0e0e0;"></div>
<span style="left:468.33px;top:270.00px;font-size:8px;line-height:11px;color:#333;">K</span>
<div style="left:497.1px;top:271.5px;width:0.8px;height:9.5px;background:#e0e0e0;"></div>
<span style="left:521.77px;top:270.00px;font-size:8px;line-height:11px;color:#333;">L</span>
<div style="left:550.1px;top:271.5px;width:0.8px;height:9.5px;background:#e0e0e0;"></div>
<span style="left:573.66px;top:270.00px;font-size:8px;line-height:11px;color:#333;">M</span>
<div style="left:603.1px;top:271.5px;width:0.8px;height:9.5px;background:#e0e0e0;"></div>
<span style="left:627.11px;top:270.00px;font-size:8px;line-height:11px;color:#333;">N</span>
<div style="left:656.1px;top:271.5px;width:0.8px;height:9.5px;background:#e0e0e0;"></div>
<span style="left:679.88px;top:270.00px;font-size:8px;line-height:11px;color:#333;">O</span>
<div style="left:709.1px;top:271.5px;width:0.8px;height:9.5px;background:#e0e0e0;"></div>
<span style="left:733.33px;top:270.00px;font-size:8px;line-height:11px;color:#333;">P</span>
<div style="left:762.1px;top:271.5px;width:0.8px;height:9.5px;background:#e0e0e0;"></div>
<span style="left:785.88px;top:270.00px;font-size:8px;line-height:11px;color:#333;">Q</span>
<div style="left:815.1px;top:271.5px;width:0.8px;height:9.5px;background:#e0e0e0;"></div>
<span style="left:839.11px;top:270.00px;font-size:8px;line-height:11px;color:#333;">R</span>
<div style="left:868.1px;top:271.5px;width:0.8px;height:9.5px;background:#e0e0e0;"></div>
<span style="left:892.33px;top:270.00px;font-size:8px;line-height:11px;color:#333;">S</span>
<div style="left:921.1px;top:271.5px;width:0.8px;height:9.5px;background:#e0e0e0;"></div>
<span style="left:945.55px;top:270.00px;font-size:8px;line-height:11px;color:#333;">T</span>
<div style="left:974.1px;top:271.5px;width:0.8px;height:9.5px;background:#e0e0e0;"></div>
<span style="left:998.11px;top:270.00px;font-size:8px;line-height:11px;color:#333;">U</span>
<div style="left:1027.1px;top:271.5px;width:0.8px;height:9.5px;background:#e0e0e0;"></div>
<span style="left:1051.33px;top:270.00px;font-size:8px;line-height:11px;color:#333;">V</span>
<div style="left:1080.1px;top:271.5px;width:0.8px;height:9.5px;background:#e0e0e0;"></div>
<span style="left:1103.22px;top:270.00px;font-size:8px;line-height:11px;color:#333;">W</span>
<div style="left:1133.1px;top:271.5px;width:0.8px;height:9.5px;background:#e0e0e0;"></div>
<span style="left:1157.33px;top:270.00px;font-size:8px;line-height:11px;color:#333;">X</span>
<div style="left:1186.1px;top:271.5px;width:0.8px;height:9.5px;background:#e0e0e0;"></div>
<span style="left:1210.33px;top:270.00px;font-size:8px;line-height:11px;color:#333;">Y</span>
<div style="left:1239.1px;top:271.5px;width:0.8px;height:9.5px;background:#e0e0e0;"></div>
<span style="left:1263.55px;top:270.00px;font-size:8px;line-height:11px;color:#333;">Z</span>
<div style="left:1292.1px;top:271.5px;width:0.8px;height:9.5px;background:#e0e0e0;"></div>
<span style="left:1313.66px;top:270.00px;font-size:8px;line-height:11px;color:#333;">AA</span>
<div style="left:1345.1px;top:271.5px;width:0.8px;height:9.5px;background:#e0e0e0;"></div>
<span style="left:1366.66px;top:270.00px;font-size:8px;line-height:11px;color:#333;">AB</span>
<span style="left:37.02px;top:284.00px;font-size:8.2px;line-height:11px;color:#4a4a4a;">1</span>
<div style="left:27.3px;top:294.40000000000003px;width:23px;height:0.8px;background:#dedede;"></div>
<span style="left:37.02px;top:297.00px;font-size:8.2px;line-height:11px;color:#4a4a4a;">2</span>
<div style="left:27.3px;top:307.3px;width:23px;height:0.8px;background:#dedede;"></div>
<span style="left:37.02px;top:310.00px;font-size:8.2px;line-height:11px;color:#4a4a4a;">3</span>
<div style="left:27.3px;top:320.1px;width:23px;height:0.8px;background:#dedede;"></div>
<span style="left:37.02px;top:323.00px;font-size:8.2px;line-height:11px;color:#4a4a4a;">4</span>
<div style="left:27.3px;top:333.20000000000005px;width:23px;height:0.8px;background:#dedede;"></div>
<span style="left:37.02px;top:336.00px;font-size:8.2px;line-height:11px;color:#4a4a4a;">5</span>
<div style="left:27.3px;top:346.1px;width:23px;height:0.8px;background:#dedede;"></div>
<span style="left:37.02px;top:349.00px;font-size:8.2px;line-height:11px;color:#4a4a4a;">6</span>
<div style="left:27.3px;top:359.20000000000005px;width:23px;height:0.8px;background:#dedede;"></div>
<span style="left:37.02px;top:362.00px;font-size:8.2px;line-height:11px;color:#4a4a4a;">7</span>
<div style="left:27.3px;top:372.1px;width:23px;height:0.8px;background:#dedede;"></div>
<span style="left:37.02px;top:375.00px;font-size:8.2px;line-height:11px;color:#4a4a4a;">8</span>
<div style="left:27.3px;top:385.20000000000005px;width:23px;height:0.8px;background:#dedede;"></div>
<span style="left:37.02px;top:388.00px;font-size:8.2px;line-height:11px;color:#4a4a4a;">9</span>
<div style="left:27.3px;top:398.1px;width:23px;height:0.8px;background:#dedede;"></div>
<span style="left:34.75px;top:401.00px;font-size:8.2px;line-height:11px;color:#4a4a4a;">10</span>
<div style="left:27.3px;top:411.20000000000005px;width:23px;height:0.8px;background:#dedede;"></div>
<span style="left:35.05px;top:430.00px;font-size:8.2px;line-height:11px;color:#4a4a4a;">11</span>
<div style="left:27.3px;top:440.1px;width:23px;height:0.8px;background:#dedede;"></div>
<span style="left:34.75px;top:443.00px;font-size:8.2px;line-height:11px;color:#4a4a4a;">12</span>
<div style="left:27.3px;top:453.1px;width:23px;height:0.8px;background:#dedede;"></div>
<span style="left:34.75px;top:456.00px;font-size:8.2px;line-height:11px;color:#4a4a4a;">13</span>
<div style="left:27.3px;top:466.1px;width:23px;height:0.8px;background:#dedede;"></div>
<span style="left:34.75px;top:469.00px;font-size:8.2px;line-height:11px;color:#4a4a4a;">14</span>
<div style="left:27.3px;top:479.1px;width:23px;height:0.8px;background:#dedede;"></div>
<span style="left:34.75px;top:482.00px;font-size:8.2px;line-height:11px;color:#4a4a4a;">15</span>
<div style="left:27.3px;top:492.1px;width:23px;height:0.8px;background:#dedede;"></div>
<span style="left:34.75px;top:495.00px;font-size:8.2px;line-height:11px;color:#4a4a4a;">16</span>
<div style="left:27.3px;top:505.1px;width:23px;height:0.8px;background:#dedede;"></div>
<span style="left:34.75px;top:508.00px;font-size:8.2px;line-height:11px;color:#4a4a4a;">17</span>
<div style="left:27.3px;top:518.1px;width:23px;height:0.8px;background:#dedede;"></div>
<span style="left:34.75px;top:521.00px;font-size:8.2px;line-height:11px;color:#4a4a4a;">18</span>
<div style="left:27.3px;top:531.1px;width:23px;height:0.8px;background:#dedede;"></div>
<span style="left:34.75px;top:534.00px;font-size:8.2px;line-height:11px;color:#4a4a4a;">19</span>
<div style="left:27.3px;top:544.1px;width:23px;height:0.8px;background:#dedede;"></div>
<span style="left:34.75px;top:547.00px;font-size:8.2px;line-height:11px;color:#4a4a4a;">20</span>
<div style="left:27.3px;top:557.1px;width:23px;height:0.8px;background:#dedede;"></div>
<span style="left:34.75px;top:560.00px;font-size:8.2px;line-height:11px;color:#4a4a4a;">21</span>
<div style="left:27.3px;top:570.1px;width:23px;height:0.8px;background:#dedede;"></div>
<span style="left:34.75px;top:573.00px;font-size:8.2px;line-height:11px;color:#4a4a4a;">22</span>
<div style="left:27.3px;top:583.1px;width:23px;height:0.8px;background:#dedede;"></div>
<span style="left:34.75px;top:586.00px;font-size:8.2px;line-height:11px;color:#4a4a4a;">23</span>
<div style="left:27.3px;top:596.1px;width:23px;height:0.8px;background:#dedede;"></div>
<span style="left:34.75px;top:599.00px;font-size:8.2px;line-height:11px;color:#4a4a4a;">24</span>
<div style="left:27.3px;top:609.1px;width:23px;height:0.8px;background:#dedede;"></div>
<span style="left:34.75px;top:612.00px;font-size:8.2px;line-height:11px;color:#4a4a4a;">25</span>
<div style="left:27.3px;top:622.1px;width:23px;height:0.8px;background:#dedede;"></div>
<span style="left:34.75px;top:625.00px;font-size:8.2px;line-height:11px;color:#4a4a4a;">26</span>
<div style="left:27.3px;top:635.1px;width:23px;height:0.8px;background:#dedede;"></div>
<span style="left:34.75px;top:638.00px;font-size:8.2px;line-height:11px;color:#4a4a4a;">27</span>
<div style="left:27.3px;top:648.1px;width:23px;height:0.8px;background:#dedede;"></div>
<span style="left:34.75px;top:651.00px;font-size:8.2px;line-height:11px;color:#4a4a4a;">28</span>
<div style="left:27.3px;top:661.1px;width:23px;height:0.8px;background:#dedede;"></div>
<span style="left:34.75px;top:664.00px;font-size:8.2px;line-height:11px;color:#4a4a4a;">29</span>
<div style="left:27.3px;top:674.1px;width:23px;height:0.8px;background:#dedede;"></div>
<span style="left:34.75px;top:677.00px;font-size:8.2px;line-height:11px;color:#4a4a4a;">30</span>
<div style="left:27.3px;top:687.1px;width:23px;height:0.8px;background:#dedede;"></div>
<span style="left:34.75px;top:690.00px;font-size:8.2px;line-height:11px;color:#4a4a4a;">31</span>
<div style="left:27.3px;top:700.1px;width:23px;height:0.8px;background:#dedede;"></div>
<span style="left:34.75px;top:703.00px;font-size:8.2px;line-height:11px;color:#4a4a4a;">32</span>
<div style="left:27.3px;top:713.1px;width:23px;height:0.8px;background:#dedede;"></div>
<span style="left:34.75px;top:716.00px;font-size:8.2px;line-height:11px;color:#4a4a4a;">33</span>
<div style="left:27.3px;top:726.1px;width:23px;height:0.8px;background:#dedede;"></div>
<span style="left:34.75px;top:729.00px;font-size:8.2px;line-height:11px;color:#4a4a4a;">34</span>
<div style="left:27.3px;top:739.1px;width:23px;height:0.8px;background:#dedede;"></div>
<span style="left:34.75px;top:742.00px;font-size:8.2px;line-height:11px;color:#4a4a4a;">35</span>
<div style="left:27.3px;top:752.1px;width:23px;height:0.8px;background:#dedede;"></div>
<span style="left:34.75px;top:755.00px;font-size:8.2px;line-height:11px;color:#4a4a4a;">36</span>
<div style="left:27.3px;top:765.1px;width:23px;height:0.8px;background:#dedede;"></div>
<span style="left:34.75px;top:768.00px;font-size:8.2px;line-height:11px;color:#4a4a4a;">37</span>
<div style="left:27.3px;top:778.1px;width:23px;height:0.8px;background:#dedede;"></div>
<span style="left:34.75px;top:781.00px;font-size:8.2px;line-height:11px;color:#4a4a4a;">38</span>
<div style="left:27.3px;top:791.1px;width:23px;height:0.8px;background:#dedede;"></div>
<span style="left:34.75px;top:794.00px;font-size:8.2px;line-height:11px;color:#4a4a4a;">39</span>
<div style="left:27.3px;top:804.1px;width:23px;height:0.8px;background:#dedede;"></div>
<span style="left:34.75px;top:807.00px;font-size:8.2px;line-height:11px;color:#4a4a4a;">40</span>
<div style="left:27.3px;top:817.1px;width:23px;height:0.8px;background:#dedede;"></div>
<span style="left:34.75px;top:820.00px;font-size:8.2px;line-height:11px;color:#4a4a4a;">41</span>
<div style="left:27.3px;top:830.1px;width:23px;height:0.8px;background:#dedede;"></div>
<span style="left:34.75px;top:833.00px;font-size:8.2px;line-height:11px;color:#4a4a4a;">42</span>
<div style="left:27.3px;top:843.1px;width:23px;height:0.8px;background:#dedede;"></div>
<span style="left:34.75px;top:846.00px;font-size:8.2px;line-height:11px;color:#4a4a4a;">43</span>
<div style="left:27.3px;top:856.1px;width:23px;height:0.8px;background:#dedede;"></div>
<span style="left:34.75px;top:859.00px;font-size:8.2px;line-height:11px;color:#4a4a4a;">44</span>
<div style="left:27.3px;top:869.1px;width:23px;height:0.8px;background:#dedede;"></div>
<span style="left:34.75px;top:872.00px;font-size:8.2px;line-height:11px;color:#4a4a4a;">45</span>
<div style="left:27.3px;top:882.1px;width:23px;height:0.8px;background:#dedede;"></div>
<span style="left:34.75px;top:885.00px;font-size:8.2px;line-height:11px;color:#4a4a4a;">46</span>
<div style="left:27.3px;top:895.1px;width:23px;height:0.8px;background:#dedede;"></div>
<span style="left:34.75px;top:898.00px;font-size:8.2px;line-height:11px;color:#4a4a4a;">47</span>
<div style="left:27.3px;top:908.1px;width:23px;height:0.8px;background:#dedede;"></div>
<span style="left:34.75px;top:911.00px;font-size:8.2px;line-height:11px;color:#4a4a4a;">48</span>
<div style="left:27.3px;top:921.1px;width:23px;height:0.8px;background:#dedede;"></div>
<span style="left:34.75px;top:924.00px;font-size:8.2px;line-height:11px;color:#4a4a4a;">49</span>
<div style="left:27.3px;top:934.1px;width:23px;height:0.8px;background:#dedede;"></div>
<span style="left:34.75px;top:937.00px;font-size:8.2px;line-height:11px;color:#4a4a4a;">50</span>
<div style="left:27.3px;top:947.1px;width:23px;height:0.8px;background:#dedede;"></div>
<span style="left:34.75px;top:950.00px;font-size:8.2px;line-height:11px;color:#4a4a4a;">51</span>
<div style="left:27.3px;top:960.1px;width:23px;height:0.8px;background:#dedede;"></div>
<span style="left:34.75px;top:963.00px;font-size:8.2px;line-height:11px;color:#4a4a4a;">52</span>
<div style="left:27.3px;top:973.1px;width:23px;height:0.8px;background:#dedede;"></div>
<span style="left:34.75px;top:976.00px;font-size:8.2px;line-height:11px;color:#4a4a4a;">53</span>
<div style="left:27.3px;top:986.1px;width:23px;height:0.8px;background:#dedede;"></div>
<span style="left:34.75px;top:989.00px;font-size:8.2px;line-height:11px;color:#4a4a4a;">54</span>
<div style="left:27.3px;top:999.1px;width:23px;height:0.8px;background:#dedede;"></div>
<span style="left:34.75px;top:1002.00px;font-size:8.2px;line-height:11px;color:#4a4a4a;">55</span>
<div style="left:27.3px;top:1012.1px;width:23px;height:0.8px;background:#dedede;"></div>
<span style="left:34.75px;top:1015.00px;font-size:8.2px;line-height:11px;color:#4a4a4a;">56</span>
<div style="left:27.3px;top:1025.1px;width:23px;height:0.8px;background:#dedede;"></div>
<span style="left:34.75px;top:1028.00px;font-size:8.2px;line-height:11px;color:#4a4a4a;">57</span>
<div style="left:27.3px;top:1038.1px;width:23px;height:0.8px;background:#dedede;"></div>
<span style="left:34.75px;top:1041.00px;font-size:8.2px;line-height:11px;color:#4a4a4a;">58</span>
<div style="left:27.3px;top:1051.1px;width:23px;height:0.8px;background:#dedede;"></div>
<span style="left:34.75px;top:1054.00px;font-size:8.2px;line-height:11px;color:#4a4a4a;">59</span>
<div style="left:27.3px;top:1064.1px;width:23px;height:0.8px;background:#dedede;"></div>
<span style="left:34.75px;top:1067.00px;font-size:8.2px;line-height:11px;color:#4a4a4a;">60</span>
<div style="left:27.3px;top:1077.1px;width:23px;height:0.8px;background:#dedede;"></div>
<span style="left:34.75px;top:1080.00px;font-size:8.2px;line-height:11px;color:#4a4a4a;">61</span>
<div style="left:27.3px;top:1090.1px;width:23px;height:0.8px;background:#dedede;"></div>
<span style="left:34.75px;top:1093.00px;font-size:8.2px;line-height:11px;color:#4a4a4a;">62</span>
<div style="left:27.3px;top:1103.1px;width:23px;height:0.8px;background:#dedede;"></div>
<span style="left:34.75px;top:1106.00px;font-size:8.2px;line-height:11px;color:#4a4a4a;">63</span>
<div style="left:27.3px;top:1116.1px;width:23px;height:0.8px;background:#dedede;"></div>
<span style="left:34.75px;top:1119.00px;font-size:8.2px;line-height:11px;color:#4a4a4a;">64</span>
<div style="left:27.3px;top:1129.1px;width:23px;height:0.8px;background:#dedede;"></div>
<span style="left:34.75px;top:1132.00px;font-size:8.2px;line-height:11px;color:#4a4a4a;">65</span>
<div style="left:27.3px;top:1142.1px;width:23px;height:0.8px;background:#dedede;"></div>
<span style="left:34.75px;top:1145.00px;font-size:8.2px;line-height:11px;color:#4a4a4a;">66</span>
<div style="left:27.3px;top:1155.1px;width:23px;height:0.8px;background:#dedede;"></div>
<span style="left:34.75px;top:1158.00px;font-size:8.2px;line-height:11px;color:#4a4a4a;">67</span>
<div style="left:27.3px;top:1168.1px;width:23px;height:0.8px;background:#dedede;"></div>
<span style="left:34.75px;top:1171.00px;font-size:8.2px;line-height:11px;color:#4a4a4a;">68</span>
<div style="left:27.3px;top:1181.1px;width:23px;height:0.8px;background:#dedede;"></div>
<span style="left:34.75px;top:1184.00px;font-size:8.2px;line-height:11px;color:#4a4a4a;">69</span>
<div style="left:27.3px;top:1194.1px;width:23px;height:0.8px;background:#dedede;"></div>
<span style="left:34.75px;top:1197.00px;font-size:8.2px;line-height:11px;color:#4a4a4a;">70</span>
<div style="left:27.3px;top:1207.1px;width:23px;height:0.8px;background:#dedede;"></div>
<span style="left:34.75px;top:1210.00px;font-size:8.2px;line-height:11px;color:#4a4a4a;">71</span>
<div style="left:27.3px;top:1220.1px;width:23px;height:0.8px;background:#dedede;"></div>
<span style="left:34.75px;top:1223.00px;font-size:8.2px;line-height:11px;color:#4a4a4a;">72</span>
<div style="left:27.3px;top:1233.1px;width:23px;height:0.8px;background:#dedede;"></div>
<span style="left:34.75px;top:1236.00px;font-size:8.2px;line-height:11px;color:#4a4a4a;">73</span>
<div style="left:27.3px;top:1246.1px;width:23px;height:0.8px;background:#dedede;"></div>
<span style="left:34.75px;top:1249.00px;font-size:8.2px;line-height:11px;color:#4a4a4a;">74</span>
<div style="left:27.3px;top:1259.1px;width:23px;height:0.8px;background:#dedede;"></div>
<span style="left:34.75px;top:1262.00px;font-size:8.2px;line-height:11px;color:#4a4a4a;">75</span>
<div style="left:27.3px;top:1272.1px;width:23px;height:0.8px;background:#dedede;"></div>
<span style="left:34.75px;top:1275.00px;font-size:8.2px;line-height:11px;color:#4a4a4a;">76</span>
<div style="left:27.3px;top:1285.1px;width:23px;height:0.8px;background:#dedede;"></div>
<span style="left:34.75px;top:1288.00px;font-size:8.2px;line-height:11px;color:#4a4a4a;">77</span>
<div style="left:27.3px;top:1298.1px;width:23px;height:0.8px;background:#dedede;"></div>
<span style="left:34.75px;top:1301.00px;font-size:8.2px;line-height:11px;color:#4a4a4a;">78</span>
<div style="left:27.3px;top:1311.1px;width:23px;height:0.8px;background:#dedede;"></div>
<span style="left:34.75px;top:1314.00px;font-size:8.2px;line-height:11px;color:#4a4a4a;">79</span>
<div style="left:27.3px;top:1324.1px;width:23px;height:0.8px;background:#dedede;"></div>
<span style="left:34.75px;top:1327.00px;font-size:8.2px;line-height:11px;color:#4a4a4a;">80</span>
<div style="left:27.3px;top:1337.1px;width:23px;height:0.8px;background:#dedede;"></div>
<span style="left:34.75px;top:1340.00px;font-size:8.2px;line-height:11px;color:#4a4a4a;">81</span>
<div style="left:27.3px;top:1350.1px;width:23px;height:0.8px;background:#dedede;"></div>
<span style="left:34.75px;top:1353.00px;font-size:8.2px;line-height:11px;color:#4a4a4a;">82</span>
<div style="left:27.3px;top:1363.1px;width:23px;height:0.8px;background:#dedede;"></div>
<span style="left:34.75px;top:1366.00px;font-size:8.2px;line-height:11px;color:#4a4a4a;">83</span>
<div style="left:27.3px;top:1376.1px;width:23px;height:0.8px;background:#dedede;"></div>
<div style="left:50.5px;top:319px;width:1331.5px;height:14.699999999999989px;background:#70abd0;"></div>
<div style="left:50.5px;top:281.8px;width:1331.5px;height:37.89999999999998px;background:#073a6c;"></div>
<div style="left:64px;top:345.8px;width:1318px;height:14.0px;background:#073a6c;"></div>
<div style="left:78px;top:372.4px;width:1304px;height:13.300000000000011px;background:#70abd0;"></div>
<div style="left:92px;top:398px;width:1290px;height:13.800000000000011px;background:#70abd0;"></div>
<div style="left:92px;top:411px;width:141px;height:965.5px;background:#e6e6e6;"></div>
<span style="left:53.50px;top:281.00px;font-size:10.8px;line-height:14px;font-weight:700;color:#fff;letter-spacing:0.222px;">Cohort Analysis</span>
<span style="left:67.60px;top:346.00px;font-size:10.8px;line-height:14px;font-weight:700;color:#fff;letter-spacing:0.21px;">Unit Economics – Cohort Analysis</span>
<span style="left:81.80px;top:372.00px;font-size:10.8px;line-height:14px;font-weight:700;color:#fff;letter-spacing:0.375px;">Monthly Cohorts (Absolute Values Monthly-Based)</span>
<span style="left:53.63px;top:348.00px;font-size:8.5px;line-height:12px;font-weight:700;color:#111;">x</span>
<span style="left:67.63px;top:374.00px;font-size:8.5px;line-height:12px;font-weight:700;color:#111;">x</span>
<span style="left:195.50px;top:398.00px;font-size:10.8px;line-height:14px;font-weight:700;color:#fff;letter-spacing:0.281px;">Month</span>
<span style="left:238.90px;top:398.00px;font-size:10.8px;line-height:14px;font-weight:700;color:#fff;letter-spacing:0.224px;">01/01/14</span>
<span style="left:289.90px;top:398.00px;font-size:10.8px;line-height:14px;font-weight:700;color:#fff;letter-spacing:0.51px;">01/02/14</span>
<span style="left:342.90px;top:398.00px;font-size:10.8px;line-height:14px;font-weight:700;color:#fff;letter-spacing:0.51px;">01/03/14</span>
<span style="left:395.90px;top:398.00px;font-size:10.8px;line-height:14px;font-weight:700;color:#fff;letter-spacing:0.51px;">01/04/14</span>
<span style="left:448.90px;top:398.00px;font-size:10.8px;line-height:14px;font-weight:700;color:#fff;letter-spacing:0.51px;">01/05/14</span>
<span style="left:501.90px;top:398.00px;font-size:10.8px;line-height:14px;font-weight:700;color:#fff;letter-spacing:0.51px;">01/06/14</span>
<span style="left:554.90px;top:398.00px;font-size:10.8px;line-height:14px;font-weight:700;color:#fff;letter-spacing:0.51px;">01/07/14</span>
<span style="left:607.90px;top:398.00px;font-size:10.8px;line-height:14px;font-weight:700;color:#fff;letter-spacing:0.51px;">01/08/14</span>
<span style="left:660.90px;top:398.00px;font-size:10.8px;line-height:14px;font-weight:700;color:#fff;letter-spacing:0.51px;">01/09/14</span>
<span style="left:715.90px;top:398.00px;font-size:10.8px;line-height:14px;font-weight:700;color:#fff;letter-spacing:0.224px;">01/10/14</span>
<span style="left:770.90px;top:398.00px;font-size:10.8px;line-height:14px;font-weight:700;color:#fff;letter-spacing:0.023px;">01/11/14</span>
<span style="left:821.90px;top:398.00px;font-size:10.8px;line-height:14px;font-weight:700;color:#fff;letter-spacing:0.224px;">01/12/14</span>
<span style="left:874.90px;top:398.00px;font-size:10.8px;line-height:14px;font-weight:700;color:#fff;letter-spacing:0.224px;">01/01/15</span>
<span style="left:925.90px;top:398.00px;font-size:10.8px;line-height:14px;font-weight:700;color:#fff;letter-spacing:0.51px;">01/02/15</span>
<span style="left:978.90px;top:398.00px;font-size:10.8px;line-height:14px;font-weight:700;color:#fff;letter-spacing:0.51px;">01/03/15</span>
<span style="left:1031.90px;top:398.00px;font-size:10.8px;line-height:14px;font-weight:700;color:#fff;letter-spacing:0.51px;">01/04/15</span>
<span style="left:1084.90px;top:398.00px;font-size:10.8px;line-height:14px;font-weight:700;color:#fff;letter-spacing:0.51px;">01/05/15</span>
<span style="left:1137.90px;top:398.00px;font-size:10.8px;line-height:14px;font-weight:700;color:#fff;letter-spacing:0.51px;">01/06/15</span>
<span style="left:1190.90px;top:398.00px;font-size:10.8px;line-height:14px;font-weight:700;color:#fff;letter-spacing:0.51px;">01/07/15</span>
<span style="left:1243.90px;top:398.00px;font-size:10.8px;line-height:14px;font-weight:700;color:#fff;letter-spacing:0.51px;">01/08/15</span>
<span style="left:1296.90px;top:398.00px;font-size:10.8px;line-height:14px;font-weight:700;color:#fff;letter-spacing:0.51px;">01/09/15</span>
<span style="left:1351.90px;top:398.00px;font-size:10.8px;line-height:14px;font-weight:700;color:#fff;letter-spacing:0.224px;">01/10/15</span>
<span style="left:99.25px;top:410.00px;font-size:10.8px;line-height:14px;font-weight:700;color:#000;letter-spacing:0.259px;">Openin</span>
<span style="left:101.00px;top:425.00px;font-size:10.8px;line-height:14px;font-weight:700;color:#000;letter-spacing:0.4px;">g Date</span>
<span style="left:155.50px;top:425.00px;font-size:10.8px;line-height:14px;font-weight:700;color:#000;letter-spacing:1.057px;">Year</span>
<span style="left:195.75px;top:410.00px;font-size:10.8px;line-height:14px;font-weight:700;color:#000;letter-spacing:0.281px;">Month</span>
<span style="left:195.75px;top:425.00px;font-size:10.8px;line-height:14px;font-weight:700;color:#000;letter-spacing:0.459px;">Offset</span>
<div style="left:95px;top:438.3px;width:47px;height:1.1px;background:#000;"></div>
<div style="left:147px;top:438.3px;width:43px;height:1.1px;background:#000;"></div>
<div style="left:195px;top:438.3px;width:35px;height:1.1px;background:#000;"></div>
<div style="left:4.1px;top:387.6px;width:1.5px;height:988.9px;background:#a0a0a0;"></div>
<div style="left:4.1px;top:387.6px;width:5.7px;height:1.4px;background:#a0a0a0;"></div>
<div style="left:15.3px;top:391.05px;width:1.5px;height:1.5px;background:#9a9a9a;"></div>
<div style="left:15.3px;top:404.05px;width:1.5px;height:1.5px;background:#9a9a9a;"></div>
<div style="left:15.3px;top:425.05px;width:1.5px;height:1.5px;background:#9a9a9a;"></div>
<div style="left:15.3px;top:446.0px;width:1.5px;height:1.5px;background:#9a9a9a;"></div>
<div style="left:15.3px;top:459.0px;width:1.5px;height:1.5px;background:#9a9a9a;"></div>
<div style="left:15.3px;top:472.0px;width:1.5px;height:1.5px;background:#9a9a9a;"></div>
<div style="left:15.3px;top:485.0px;width:1.5px;height:1.5px;background:#9a9a9a;"></div>
<div style="left:15.3px;top:498.0px;width:1.5px;height:1.5px;background:#9a9a9a;"></div>
<div style="left:15.3px;top:511.0px;width:1.5px;height:1.5px;background:#9a9a9a;"></div>
<div style="left:15.3px;top:524.0px;width:1.5px;height:1.5px;background:#9a9a9a;"></div>
<div style="left:15.3px;top:537.0px;width:1.5px;height:1.5px;background:#9a9a9a;"></div>
<div style="left:15.3px;top:550.0px;width:1.5px;height:1.5px;background:#9a9a9a;"></div>
<div style="left:15.3px;top:563.0px;width:1.5px;height:1.5px;background:#9a9a9a;"></div>
<div style="left:15.3px;top:576.0px;width:1.5px;height:1.5px;background:#9a9a9a;"></div>
<div style="left:15.3px;top:589.0px;width:1.5px;height:1.5px;background:#9a9a9a;"></div>
<div style="left:15.3px;top:602.0px;width:1.5px;height:1.5px;background:#9a9a9a;"></div>
<div style="left:15.3px;top:615.0px;width:1.5px;height:1.5px;background:#9a9a9a;"></div>
<div style="left:15.3px;top:628.0px;width:1.5px;height:1.5px;background:#9a9a9a;"></div>
<div style="left:15.3px;top:641.0px;width:1.5px;height:1.5px;background:#9a9a9a;"></div>
<div style="left:15.3px;top:654.0px;width:1.5px;height:1.5px;background:#9a9a9a;"></div>
<div style="left:15.3px;top:667.0px;width:1.5px;height:1.5px;background:#9a9a9a;"></div>
<div style="left:15.3px;top:680.0px;width:1.5px;height:1.5px;background:#9a9a9a;"></div>
<div style="left:15.3px;top:693.0px;width:1.5px;height:1.5px;background:#9a9a9a;"></div>
<div style="left:15.3px;top:706.0px;width:1.5px;height:1.5px;background:#9a9a9a;"></div>
<div style="left:15.3px;top:719.0px;width:1.5px;height:1.5px;background:#9a9a9a;"></div>
<div style="left:15.3px;top:732.0px;width:1.5px;height:1.5px;background:#9a9a9a;"></div>
<div style="left:15.3px;top:745.0px;width:1.5px;height:1.5px;background:#9a9a9a;"></div>
<div style="left:15.3px;top:758.0px;width:1.5px;height:1.5px;background:#9a9a9a;"></div>
<div style="left:15.3px;top:771.0px;width:1.5px;height:1.5px;background:#9a9a9a;"></div>
<div style="left:15.3px;top:784.0px;width:1.5px;height:1.5px;background:#9a9a9a;"></div>
<div style="left:15.3px;top:797.0px;width:1.5px;height:1.5px;background:#9a9a9a;"></div>
<div style="left:15.3px;top:810.0px;width:1.5px;height:1.5px;background:#9a9a9a;"></div>
<div style="left:15.3px;top:823.0px;width:1.5px;height:1.5px;background:#9a9a9a;"></div>
<div style="left:15.3px;top:836.0px;width:1.5px;height:1.5px;background:#9a9a9a;"></div>
<div style="left:15.3px;top:849.0px;width:1.5px;height:1.5px;background:#9a9a9a;"></div>
<div style="left:15.3px;top:862.0px;width:1.5px;height:1.5px;background:#9a9a9a;"></div>
<div style="left:15.3px;top:875.0px;width:1.5px;height:1.5px;background:#9a9a9a;"></div>
<div style="left:15.3px;top:888.0px;width:1.5px;height:1.5px;background:#9a9a9a;"></div>
<div style="left:15.3px;top:901.0px;width:1.5px;height:1.5px;background:#9a9a9a;"></div>
<div style="left:15.3px;top:914.0px;width:1.5px;height:1.5px;background:#9a9a9a;"></div>
<div style="left:15.3px;top:927.0px;width:1.5px;height:1.5px;background:#9a9a9a;"></div>
<div style="left:15.3px;top:940.0px;width:1.5px;height:1.5px;background:#9a9a9a;"></div>
<div style="left:15.3px;top:953.0px;width:1.5px;height:1.5px;background:#9a9a9a;"></div>
<div style="left:15.3px;top:966.0px;width:1.5px;height:1.5px;background:#9a9a9a;"></div>
<div style="left:15.3px;top:979.0px;width:1.5px;height:1.5px;background:#9a9a9a;"></div>
<div style="left:15.3px;top:992.0px;width:1.5px;height:1.5px;background:#9a9a9a;"></div>
<div style="left:15.3px;top:1005.0px;width:1.5px;height:1.5px;background:#9a9a9a;"></div>
<div style="left:15.3px;top:1018.0px;width:1.5px;height:1.5px;background:#9a9a9a;"></div>
<div style="left:15.3px;top:1031.0px;width:1.5px;height:1.5px;background:#9a9a9a;"></div>
<div style="left:15.3px;top:1044.0px;width:1.5px;height:1.5px;background:#9a9a9a;"></div>
<div style="left:15.3px;top:1057.0px;width:1.5px;height:1.5px;background:#9a9a9a;"></div>
<div style="left:15.3px;top:1070.0px;width:1.5px;height:1.5px;background:#9a9a9a;"></div>
<div style="left:15.3px;top:1083.0px;width:1.5px;height:1.5px;background:#9a9a9a;"></div>
<div style="left:15.3px;top:1096.0px;width:1.5px;height:1.5px;background:#9a9a9a;"></div>
<div style="left:15.3px;top:1109.0px;width:1.5px;height:1.5px;background:#9a9a9a;"></div>
<div style="left:15.3px;top:1122.0px;width:1.5px;height:1.5px;background:#9a9a9a;"></div>
<div style="left:15.3px;top:1135.0px;width:1.5px;height:1.5px;background:#9a9a9a;"></div>
<div style="left:15.3px;top:1148.0px;width:1.5px;height:1.5px;background:#9a9a9a;"></div>
<div style="left:15.3px;top:1161.0px;width:1.5px;height:1.5px;background:#9a9a9a;"></div>
<div style="left:15.3px;top:1174.0px;width:1.5px;height:1.5px;background:#9a9a9a;"></div>
<div style="left:15.3px;top:1187.0px;width:1.5px;height:1.5px;background:#9a9a9a;"></div>
<div style="left:15.3px;top:1200.0px;width:1.5px;height:1.5px;background:#9a9a9a;"></div>
<div style="left:15.3px;top:1213.0px;width:1.5px;height:1.5px;background:#9a9a9a;"></div>
<div style="left:15.3px;top:1226.0px;width:1.5px;height:1.5px;background:#9a9a9a;"></div>
<div style="left:15.3px;top:1239.0px;width:1.5px;height:1.5px;background:#9a9a9a;"></div>
<div style="left:15.3px;top:1252.0px;width:1.5px;height:1.5px;background:#9a9a9a;"></div>
<div style="left:15.3px;top:1265.0px;width:1.5px;height:1.5px;background:#9a9a9a;"></div>
<div style="left:15.3px;top:1278.0px;width:1.5px;height:1.5px;background:#9a9a9a;"></div>
<div style="left:15.3px;top:1291.0px;width:1.5px;height:1.5px;background:#9a9a9a;"></div>
<div style="left:15.3px;top:1304.0px;width:1.5px;height:1.5px;background:#9a9a9a;"></div>
<div style="left:15.3px;top:1317.0px;width:1.5px;height:1.5px;background:#9a9a9a;"></div>
<div style="left:15.3px;top:1330.0px;width:1.5px;height:1.5px;background:#9a9a9a;"></div>
<div style="left:15.3px;top:1343.0px;width:1.5px;height:1.5px;background:#9a9a9a;"></div>
<div style="left:15.3px;top:1356.0px;width:1.5px;height:1.5px;background:#9a9a9a;"></div>
<div style="left:15.3px;top:1369.0px;width:1.5px;height:1.5px;background:#9a9a9a;"></div>
<span style="left:101.47px;top:440.00px;font-size:10.5px;line-height:14px;color:#000;letter-spacing:-0.775px;">01/01/10</span>
<span style="left:157.68px;top:440.00px;font-size:10.5px;line-height:14px;color:#000;letter-spacing:-0.57px;">2010</span>
<span style="left:205.71px;top:440.00px;font-size:10.5px;line-height:14px;color:#000;">-48</span>
<div class="row" style="top:440.7px"><b>30.8</b><b>16.6</b><b>23.8</b><b>25.7</b><b>37.9</b><b>26.7</b><b>30.3</b><b>24.4</b><b>37.1</b><b>28.4</b><b>28.1</b><b>32.1</b><b>30.1</b><b>57.9</b><b>30.3</b><b>41.3</b><b>39.7</b><b>39.6</b><b>40.7</b><b>24.7</b><b>53.9</b><b>43.1</b></div>
<span style="left:100.70px;top:453.00px;font-size:10.5px;line-height:14px;color:#000;letter-spacing:-0.554px;">01/02/10</span>
<span style="left:157.68px;top:453.00px;font-size:10.5px;line-height:14px;color:#000;letter-spacing:-0.57px;">2010</span>
<span style="left:205.71px;top:453.00px;font-size:10.5px;line-height:14px;color:#000;">-47</span>
<div class="row" style="top:453.7px"><b>31.7</b><b>49.7</b><b>68.9</b><b>66.4</b><b>64.2</b><b>49.3</b><b>54.6</b><b>64.6</b><b>88.0</b><b>80.3</b><b>55.1</b><b>46.9</b><b>47.7</b><b>128.1</b><b>75.3</b><b>72.7</b><b>61.7</b><b>66.2</b><b>68.1</b><b>69.8</b><b>83.7</b><b>76.4</b></div>
<span style="left:100.70px;top:466.00px;font-size:10.5px;line-height:14px;color:#000;letter-spacing:-0.554px;">01/03/10</span>
<span style="left:157.68px;top:466.00px;font-size:10.5px;line-height:14px;color:#000;letter-spacing:-0.57px;">2010</span>
<span style="left:205.71px;top:466.00px;font-size:10.5px;line-height:14px;color:#000;">-46</span>
<div class="row" style="top:466.7px"><b class="d">-</b><b class="d">-</b><b class="d">-</b><b class="d">-</b><b class="d">-</b><b class="d">-</b><b class="d">-</b><b class="d">-</b><b class="d">-</b><b class="d">-</b><b class="d">-</b><b class="d">-</b><b class="d">-</b><b class="d">-</b><b class="d">-</b><b class="d">-</b><b class="d">-</b><b class="d">-</b><b class="d">-</b><b class="d">-</b><b class="d">-</b><b class="d">-</b></div>
<span style="left:100.70px;top:479.00px;font-size:10.5px;line-height:14px;color:#000;letter-spacing:-0.554px;">01/04/10</span>
<span style="left:157.68px;top:479.00px;font-size:10.5px;line-height:14px;color:#000;letter-spacing:-0.57px;">2010</span>
<span style="left:205.71px;top:479.00px;font-size:10.5px;line-height:14px;color:#000;">-45</span>
<div class="row" style="top:479.7px"><b class="d">-</b><b class="d">-</b><b class="d">-</b><b class="d">-</b><b class="d">-</b><b class="d">-</b><b class="d">-</b><b class="d">-</b><b class="d">-</b><b class="d">-</b><b class="d">-</b><b class="d">-</b><b class="d">-</b><b class="d">-</b><b class="d">-</b><b class="d">-</b><b class="d">-</b><b class="d">-</b><b class="d">-</b><b class="d">-</b><b class="d">-</b><b class="d">-</b></div>
<span style="left:100.70px;top:492.00px;font-size:10.5px;line-height:14px;color:#000;letter-spacing:-0.554px;">01/05/10</span>
<span style="left:157.68px;top:492.00px;font-size:10.5px;line-height:14px;color:#000;letter-spacing:-0.57px;">2010</span>
<span style="left:205.71px;top:492.00px;font-size:10.5px;line-height:14px;color:#000;">-44</span>
<div class="row" style="top:492.7px"><b class="d">-</b><b class="d">-</b><b class="d">-</b><b class="d">-</b><b class="d">-</b><b class="d">-</b><b class="d">-</b><b class="d">-</b><b class="d">-</b><b class="d">-</b><b class="d">-</b><b class="d">-</b><b class="d">-</b><b class="d">-</b><b class="d">-</b><b class="d">-</b><b class="d">-</b><b class="d">-</b><b class="d">-</b><b class="d">-</b><b class="d">-</b><b class="d">-</b></div>
<span style="left:100.70px;top:505.00px;font-size:10.5px;line-height:14px;color:#000;letter-spacing:-0.554px;">01/06/10</span>
<span style="left:157.68px;top:505.00px;font-size:10.5px;line-height:14px;color:#000;letter-spacing:-0.57px;">2010</span>
<span style="left:205.71px;top:505.00px;font-size:10.5px;line-height:14px;color:#000;">-43</span>
<div class="row" style="top:505.7px"><b class="d">-</b><b class="d">-</b><b class="d">-</b><b class="d">-</b><b class="d">-</b><b class="d">-</b><b class="d">-</b><b class="d">-</b><b class="d">-</b><b class="d">-</b><b class="d">-</b><b class="d">-</b><b class="d">-</b><b class="d">-</b><b class="d">-</b><b class="d">-</b><b class="d">-</b><b class="d">-</b><b class="d">-</b><b class="d">-</b><b class="d">-</b><b class="d">-</b></div>
<span style="left:100.70px;top:518.00px;font-size:10.5px;line-height:14px;color:#000;letter-spacing:-0.554px;">01/07/10</span>
<span style="left:157.68px;top:518.00px;font-size:10.5px;line-height:14px;color:#000;letter-spacing:-0.57px;">2010</span>
<span style="left:205.71px;top:518.00px;font-size:10.5px;line-height:14px;color:#000;">-42</span>
<div class="row" style="top:518.7px"><b class="d">-</b><b class="d">-</b><b class="d">-</b><b class="d">-</b><b class="d">-</b><b class="d">-</b><b class="d">-</b><b class="d">-</b><b class="d">-</b><b class="d">-</b><b class="d">-</b><b class="d">-</b><b class="d">-</b><b class="d">-</b><b class="d">-</b><b class="d">-</b><b class="d">-</b><b class="d">-</b><b class="d">-</b><b class="d">-</b><b class="d">-</b><b class="d">-</b></div>
<span style="left:100.70px;top:531.00px;font-size:10.5px;line-height:14px;color:#000;letter-spacing:-0.554px;">01/08/10</span>
<span style="left:157.68px;top:531.00px;font-size:10.5px;line-height:14px;color:#000;letter-spacing:-0.57px;">2010</span>
<span style="left:205.71px;top:531.00px;font-size:10.5px;line-height:14px;color:#000;">-41</span>
<div class="row" style="top:531.7px"><b class="d">-</b><b class="d">-</b><b class="d">-</b><b class="d">-</b><b class="d">-</b><b class="d">-</b><b class="d">-</b><b class="d">-</b><b class="d">-</b><b class="d">-</b><b class="d">-</b><b class="d">-</b><b class="d">-</b><b class="d">-</b><b class="d">-</b><b class="d">-</b><b class="d">-</b><b class="d">-</b><b class="d">-</b><b class="d">-</b><b class="d">-</b><b class="d">-</b></div>
<span style="left:100.70px;top:544.00px;font-size:10.5px;line-height:14px;color:#000;letter-spacing:-0.554px;">01/09/10</span>
<span style="left:157.68px;top:544.00px;font-size:10.5px;line-height:14px;color:#000;letter-spacing:-0.57px;">2010</span>
<span style="left:205.71px;top:544.00px;font-size:10.5px;line-height:14px;color:#000;">-40</span>
<div class="row" style="top:544.7px"><b>48.7</b><b>170.2</b><b>82.0</b><b>77.7</b><b>77.2</b><b>37.4</b><b>59.0</b><b>59.1</b><b>70.8</b><b>55.3</b><b>51.3</b><b>60.4</b><b>76.3</b><b>332.6</b><b>85.5</b><b>70.8</b><b>65.0</b><b>74.9</b><b>59.2</b><b>73.5</b><b>80.5</b><b>74.2</b></div>
<span style="left:101.47px;top:557.00px;font-size:10.5px;line-height:14px;color:#000;letter-spacing:-0.775px;">01/10/10</span>
<span style="left:157.68px;top:557.00px;font-size:10.5px;line-height:14px;color:#000;letter-spacing:-0.57px;">2010</span>
<span style="left:205.71px;top:557.00px;font-size:10.5px;line-height:14px;color:#000;">-39</span>
<div class="row" style="top:557.7px"><b>76.2</b><b>170.5</b><b>123.3</b><b>117.7</b><b>94.8</b><b>82.3</b><b>86.9</b><b>86.1</b><b>80.9</b><b>90.3</b><b>87.3</b><b>80.5</b><b>102.2</b><b>350.4</b><b>129.0</b><b>151.2</b><b>98.2</b><b>106.1</b><b>111.9</b><b>94.0</b><b>88.9</b><b>105.3</b></div>
<span style="left:102.25px;top:570.00px;font-size:10.5px;line-height:14px;color:#000;letter-spacing:-0.885px;">01/11/10</span>
<span style="left:157.68px;top:570.00px;font-size:10.5px;line-height:14px;color:#000;letter-spacing:-0.57px;">2010</span>
<span style="left:205.71px;top:570.00px;font-size:10.5px;line-height:14px;color:#000;">-38</span>
<div class="row" style="top:570.7px"><b class="d">-</b><b class="d">-</b><b class="d">-</b><b class="d">-</b><b class="d">-</b><b class="d">-</b><b class="d">-</b><b class="d">-</b><b class="d">-</b><b class="d">-</b><b class="d">-</b><b class="d">-</b><b class="d">-</b><b class="d">-</b><b class="d">-</b><b class="d">-</b><b class="d">-</b><b class="d">-</b><b class="d">-</b><b class="d">-</b><b class="d">-</b><b class="d">-</b></div>
<span style="left:101.47px;top:583.00px;font-size:10.5px;line-height:14px;color:#000;letter-spacing:-0.775px;">01/12/10</span>
<span style="left:157.68px;top:583.00px;font-size:10.5px;line-height:14px;color:#000;letter-spacing:-0.57px;">2010</span>
<span style="left:205.71px;top:583.00px;font-size:10.5px;line-height:14px;color:#000;">-37</span>
<div class="row" style="top:583.7px"><b>39.6</b><b>95.9</b><b>49.3</b><b>51.3</b><b>40.1</b><b>37.1</b><b>34.9</b><b>36.3</b><b>34.6</b><b>49.9</b><b>45.6</b><b>39.5</b><b>43.3</b><b>158.9</b><b>58.2</b><b>56.5</b><b>39.5</b><b>42.3</b><b>44.4</b><b>43.4</b><b>44.2</b><b>44.8</b></div>
<span style="left:102.25px;top:596.00px;font-size:10.5px;line-height:14px;color:#000;letter-spacing:-0.885px;">01/01/11</span>
<span style="left:158.45px;top:596.00px;font-size:10.5px;line-height:14px;color:#000;letter-spacing:-0.831px;">2011</span>
<span style="left:205.71px;top:596.00px;font-size:10.5px;line-height:14px;color:#000;">-36</span>
<div class="row" style="top:596.7px"><b>187.3</b><b>401.8</b><b>261.4</b><b>202.5</b><b>153.9</b><b>154.2</b><b>129.9</b><b>138.0</b><b>152.2</b><b>145.5</b><b>170.1</b><b>143.4</b><b>263.3</b><b>905.2</b><b>287.4</b><b>261.3</b><b>174.1</b><b>176.8</b><b>161.8</b><b>174.1</b><b>208.9</b><b>206.5</b></div>
<span style="left:101.47px;top:609.00px;font-size:10.5px;line-height:14px;color:#000;letter-spacing:-0.663px;">01/02/11</span>
<span style="left:158.45px;top:609.00px;font-size:10.5px;line-height:14px;color:#000;letter-spacing:-0.831px;">2011</span>
<span style="left:205.71px;top:609.00px;font-size:10.5px;line-height:14px;color:#000;">-35</span>
<div class="row" style="top:609.7px"><b>27.4</b><b>52.2</b><b>36.6</b><b>39.3</b><b>33.5</b><b>31.6</b><b>26.7</b><b>26.5</b><b>22.0</b><b>26.4</b><b>27.0</b><b>26.6</b><b>39.2</b><b>129.7</b><b>44.5</b><b>42.3</b><b>35.4</b><b>44.0</b><b>29.9</b><b>33.1</b><b>33.7</b><b>40.2</b></div>
<span style="left:101.47px;top:622.00px;font-size:10.5px;line-height:14px;color:#000;letter-spacing:-0.663px;">01/03/11</span>
<span style="left:158.45px;top:622.00px;font-size:10.5px;line-height:14px;color:#000;letter-spacing:-0.831px;">2011</span>
<span style="left:205.71px;top:622.00px;font-size:10.5px;line-height:14px;color:#000;">-34</span>
<div class="row" style="top:622.7px"><b class="d">-</b><b class="d">-</b><b class="d">-</b><b class="d">-</b><b class="d">-</b><b class="d">-</b><b class="d">-</b><b class="d">-</b><b class="d">-</b><b class="d">-</b><b class="d">-</b><b class="d">-</b><b class="d">-</b><b class="d">-</b><b class="d">-</b><b class="d">-</b><b class="d">-</b><b class="d">-</b><b class="d">-</b><b class="d">-</b><b class="d">-</b><b class="d">-</b></div>
<span style="left:101.47px;top:635.00px;font-size:10.5px;line-height:14px;color:#000;letter-spacing:-0.663px;">01/04/11</span>
<span style="left:158.45px;top:635.00px;font-size:10.5px;line-height:14px;color:#000;letter-spacing:-0.831px;">2011</span>
<span style="left:205.71px;top:635.00px;font-size:10.5px;line-height:14px;color:#000;">-33</span>
<div class="row" style="top:635.7px"><b class="d">-</b><b class="d">-</b><b class="d">-</b><b class="d">-</b><b class="d">-</b><b class="d">-</b><b class="d">-</b><b class="d">-</b><b class="d">-</b><b class="d">-</b><b class="d">-</b><b class="d">-</b><b class="d">-</b><b class="d">-</b><b class="d">-</b><b class="d">-</b><b class="d">-</b><b class="d">-</b><b class="d">-</b><b class="d">-</b><b class="d">-</b><b class="d">-</b></div>
<span style="left:101.47px;top:648.00px;font-size:10.5px;line-height:14px;color:#000;letter-spacing:-0.663px;">01/05/11</span>
<span style="left:158.45px;top:648.00px;font-size:10.5px;line-height:14px;color:#000;letter-spacing:-0.831px;">2011</span>
<span style="left:205.71px;top:648.00px;font-size:10.5px;line-height:14px;color:#000;">-32</span>
<div class="row" style="top:648.7px"><b class="d">-</b><b class="d">-</b><b class="d">-</b><b class="d">-</b><b class="d">-</b><b class="d">-</b><b class="d">-</b><b class="d">-</b><b class="d">-</b><b class="d">-</b><b class="d">-</b><b class="d">-</b><b class="d">-</b><b class="d">-</b><b class="d">-</b><b class="d">-</b><b class="d">-</b><b class="d">-</b><b class="d">-</b><b class="d">-</b><b class="d">-</b><b class="d">-</b></div>
<span style="left:101.47px;top:661.00px;font-size:10.5px;line-height:14px;color:#000;letter-spacing:-0.663px;">01/06/11</span>
<span style="left:158.45px;top:661.00px;font-size:10.5px;line-height:14px;color:#000;letter-spacing:-0.831px;">2011</span>
<span style="left:205.71px;top:661.00px;font-size:10.5px;line-height:14px;color:#000;">-31</span>
<div class="row" style="top:661.7px"><b>59.4</b><b>77.6</b><b>98.8</b><b>76.7</b><b>81.7</b><b>90.9</b><b>86.3</b><b>88.3</b><b>86.3</b><b>89.9</b><b>75.8</b><b>70.4</b><b>79.3</b><b>181.8</b><b>98.9</b><b>91.8</b><b>86.0</b><b>102.5</b><b>93.9</b><b>100.7</b><b>110.5</b><b>114.6</b></div>
<span style="left:101.47px;top:674.00px;font-size:10.5px;line-height:14px;color:#000;letter-spacing:-0.663px;">01/07/11</span>
<span style="left:158.45px;top:674.00px;font-size:10.5px;line-height:14px;color:#000;letter-spacing:-0.831px;">2011</span>
<span style="left:205.71px;top:674.00px;font-size:10.5px;line-height:14px;color:#000;">-30</span>
<div class="row" style="top:674.7px"><b>75.2</b><b>145.5</b><b>121.5</b><b>116.3</b><b>87.7</b><b>83.3</b><b>84.0</b><b>94.9</b><b>91.7</b><b>82.4</b><b>96.7</b><b>77.5</b><b>88.8</b><b>365.9</b><b>160.9</b><b>147.5</b><b>105.7</b><b>100.7</b><b>90.6</b><b>86.9</b><b>104.1</b><b>96.3</b></div>
<span style="left:101.47px;top:687.00px;font-size:10.5px;line-height:14px;color:#000;letter-spacing:-0.663px;">01/08/11</span>
<span style="left:158.45px;top:687.00px;font-size:10.5px;line-height:14px;color:#000;letter-spacing:-0.831px;">2011</span>
<span style="left:205.71px;top:687.00px;font-size:10.5px;line-height:14px;color:#000;">-29</span>
<div class="row" style="top:687.7px"><b class="d">-</b><b class="d">-</b><b class="d">-</b><b class="d">-</b><b class="d">-</b><b class="d">-</b><b class="d">-</b><b class="d">-</b><b class="d">-</b><b class="d">-</b><b class="d">-</b><b class="d">-</b><b class="d">-</b><b class="d">-</b><b class="d">-</b><b class="d">-</b><b class="d">-</b><b class="d">-</b><b class="d">-</b><b class="d">-</b><b class="d">-</b><b class="d">-</b></div>
<span style="left:101.47px;top:700.00px;font-size:10.5px;line-height:14px;color:#000;letter-spacing:-0.663px;">01/09/11</span>
<span style="left:158.45px;top:700.00px;font-size:10.5px;line-height:14px;color:#000;letter-spacing:-0.831px;">2011</span>
<span style="left:205.71px;top:700.00px;font-size:10.5px;line-height:14px;color:#000;">-28</span>
<div class="row" style="top:700.7px"><b>85.8</b><b>178.9</b><b>125.8</b><b>122.7</b><b>98.0</b><b>94.2</b><b>89.5</b><b>108.6</b><b>101.9</b><b>94.2</b><b>91.6</b><b>106.0</b><b>109.6</b><b>448.3</b><b>173.2</b><b>126.4</b><b>109.5</b><b>100.4</b><b>112.2</b><b>124.9</b><b>116.6</b><b>124.7</b></div>
<span style="left:102.25px;top:713.00px;font-size:10.5px;line-height:14px;color:#000;letter-spacing:-0.885px;">01/10/11</span>
<span style="left:158.45px;top:713.00px;font-size:10.5px;line-height:14px;color:#000;letter-spacing:-0.831px;">2011</span>
<span style="left:205.71px;top:713.00px;font-size:10.5px;line-height:14px;color:#000;">-27</span>
<div class="row" style="top:713.7px"><b class="d">-</b><b class="d">-</b><b class="d">-</b><b class="d">-</b><b class="d">-</b><b class="d">-</b><b class="d">-</b><b class="d">-</b><b class="d">-</b><b class="d">-</b><b class="d">-</b><b class="d">-</b><b class="d">-</b><b class="d">-</b><b class="d">-</b><b class="d">-</b><b class="d">-</b><b class="d">-</b><b class="d">-</b><b class="d">-</b><b class="d">-</b><b class="d">-</b></div>
<span style="left:103.03px;top:726.00px;font-size:10.5px;line-height:14px;color:#000;letter-spacing:-0.997px;">01/11/11</span>
<span style="left:158.45px;top:726.00px;font-size:10.5px;line-height:14px;color:#000;letter-spacing:-0.831px;">2011</span>
<span style="left:205.71px;top:726.00px;font-size:10.5px;line-height:14px;color:#000;">-26</span>
<div class="row" style="top:726.7px"><b class="d">-</b><b class="d">-</b><b class="d">-</b><b class="d">-</b><b class="d">-</b><b class="d">-</b><b class="d">-</b><b class="d">-</b><b class="d">-</b><b class="d">-</b><b class="d">-</b><b class="d">-</b><b class="d">-</b><b class="d">-</b><b class="d">-</b><b class="d">-</b><b class="d">-</b><b class="d">-</b><b class="d">-</b><b class="d">-</b><b class="d">-</b><b class="d">-</b></div>
<span style="left:102.25px;top:739.00px;font-size:10.5px;line-height:14px;color:#000;letter-spacing:-0.885px;">01/12/11</span>
<span style="left:158.45px;top:739.00px;font-size:10.5px;line-height:14px;color:#000;letter-spacing:-0.831px;">2011</span>
<span style="left:205.71px;top:739.00px;font-size:10.5px;line-height:14px;color:#000;">-25</span>
<div class="row" style="top:739.7px"><b>29.8</b><b>37.3</b><b>28.7</b><b>42.1</b><b>29.0</b><b>23.0</b><b>28.0</b><b>26.8</b><b>23.9</b><b>25.6</b><b>45.5</b><b>41.0</b><b>27.3</b><b>61.0</b><b>27.1</b><b>37.0</b><b>26.4</b><b>23.0</b><b>18.9</b><b>20.7</b><b>26.9</b><b>27.5</b></div>
<span style="left:101.47px;top:752.00px;font-size:10.5px;line-height:14px;color:#000;letter-spacing:-0.775px;">01/01/12</span>
<span style="left:157.68px;top:752.00px;font-size:10.5px;line-height:14px;color:#000;letter-spacing:-0.57px;">2012</span>
<span style="left:205.71px;top:752.00px;font-size:10.5px;line-height:14px;color:#000;">-24</span>
<div class="row" style="top:752.7px"><b>327.7</b><b>860.2</b><b>436.8</b><b>319.8</b><b>210.9</b><b>198.0</b><b>172.8</b><b>223.4</b><b>217.1</b><b>231.0</b><b>235.7</b><b>218.9</b><b>382.9</b><b>1,971.6</b><b>576.9</b><b>433.6</b><b>297.1</b><b>256.1</b><b>249.9</b><b>274.7</b><b>267.6</b><b>288.4</b></div>
<span style="left:100.70px;top:765.00px;font-size:10.5px;line-height:14px;color:#000;letter-spacing:-0.554px;">01/02/12</span>
<span style="left:157.68px;top:765.00px;font-size:10.5px;line-height:14px;color:#000;letter-spacing:-0.57px;">2012</span>
<span style="left:205.71px;top:765.00px;font-size:10.5px;line-height:14px;color:#000;">-23</span>
<div class="row" style="top:765.7px"><b>32.7</b><b>50.8</b><b>42.1</b><b>47.7</b><b>55.6</b><b>27.6</b><b>32.0</b><b>34.7</b><b>27.3</b><b>36.6</b><b>36.3</b><b>35.5</b><b>44.2</b><b>102.4</b><b>49.7</b><b>44.2</b><b>31.7</b><b>51.8</b><b>41.2</b><b>43.1</b><b>41.2</b><b>40.6</b></div>
<span style="left:100.70px;top:778.00px;font-size:10.5px;line-height:14px;color:#000;letter-spacing:-0.554px;">01/03/12</span>
<span style="left:157.68px;top:778.00px;font-size:10.5px;line-height:14px;color:#000;letter-spacing:-0.57px;">2012</span>
<span style="left:205.71px;top:778.00px;font-size:10.5px;line-height:14px;color:#000;">-22</span>
<div class="row" style="top:778.7px"><b>255.0</b><b>328.8</b><b>345.9</b><b>301.4</b><b>306.4</b><b>348.6</b><b>340.7</b><b>394.8</b><b>366.6</b><b>371.4</b><b>355.7</b><b>295.3</b><b>358.8</b><b>1,056.0</b><b>480.9</b><b>453.8</b><b>399.6</b><b>424.6</b><b>413.6</b><b>423.9</b><b>413.7</b><b>381.2</b></div>
<span style="left:100.70px;top:791.00px;font-size:10.5px;line-height:14px;color:#000;letter-spacing:-0.554px;">01/04/12</span>
<span style="left:157.68px;top:791.00px;font-size:10.5px;line-height:14px;color:#000;letter-spacing:-0.57px;">2012</span>
<span style="left:205.71px;top:791.00px;font-size:10.5px;line-height:14px;color:#000;">-21</span>
<div class="row" style="top:791.7px"><b class="d">-</b><b class="d">-</b><b class="d">-</b><b class="d">-</b><b class="d">-</b><b class="d">-</b><b class="d">-</b><b class="d">-</b><b class="d">-</b><b class="d">-</b><b class="d">-</b><b class="d">-</b><b class="d">-</b><b class="d">-</b><b class="d">-</b><b class="d">-</b><b class="d">-</b><b class="d">-</b><b class="d">-</b><b class="d">-</b><b class="d">-</b><b class="d">-</b></div>
<span style="left:100.70px;top:804.00px;font-size:10.5px;line-height:14px;color:#000;letter-spacing:-0.554px;">01/05/12</span>
<span style="left:157.68px;top:804.00px;font-size:10.5px;line-height:14px;color:#000;letter-spacing:-0.57px;">2012</span>
<span style="left:205.71px;top:804.00px;font-size:10.5px;line-height:14px;color:#000;">-20</span>
<div class="row" style="top:804.7px"><b>108.2</b><b>190.3</b><b>163.1</b><b>145.6</b><b>98.8</b><b>113.4</b><b>112.3</b><b>111.1</b><b>130.7</b><b>125.3</b><b>118.5</b><b>102.6</b><b>131.9</b><b>434.2</b><b>178.7</b><b>180.9</b><b>141.7</b><b>155.4</b><b>164.0</b><b>148.8</b><b>160.2</b><b>177.3</b></div>
<span style="left:100.70px;top:817.00px;font-size:10.5px;line-height:14px;color:#000;letter-spacing:-0.554px;">01/06/12</span>
<span style="left:157.68px;top:817.00px;font-size:10.5px;line-height:14px;color:#000;letter-spacing:-0.57px;">2012</span>
<span style="left:205.71px;top:817.00px;font-size:10.5px;line-height:14px;color:#000;">-19</span>
<div class="row" style="top:817.7px"><b>49.9</b><b>168.3</b><b>100.7</b><b>69.7</b><b>55.1</b><b>48.4</b><b>61.2</b><b>61.3</b><b>75.8</b><b>69.8</b><b>65.9</b><b>61.2</b><b>82.7</b><b>446.0</b><b>120.4</b><b>107.2</b><b>72.9</b><b>78.8</b><b>91.2</b><b>74.0</b><b>78.0</b><b>83.5</b></div>
<span style="left:100.70px;top:830.00px;font-size:10.5px;line-height:14px;color:#000;letter-spacing:-0.554px;">01/07/12</span>
<span style="left:157.68px;top:830.00px;font-size:10.5px;line-height:14px;color:#000;letter-spacing:-0.57px;">2012</span>
<span style="left:205.71px;top:830.00px;font-size:10.5px;line-height:14px;color:#000;">-18</span>
<div class="row" style="top:830.7px"><b class="d">-</b><b class="d">-</b><b class="d">-</b><b class="d">-</b><b class="d">-</b><b class="d">-</b><b class="d">-</b><b class="d">-</b><b class="d">-</b><b class="d">-</b><b class="d">-</b><b class="d">-</b><b class="d">-</b><b class="d">-</b><b class="d">-</b><b class="d">-</b><b class="d">-</b><b class="d">-</b><b class="d">-</b><b class="d">-</b><b class="d">-</b><b class="d">-</b></div>
<span style="left:100.70px;top:843.00px;font-size:10.5px;line-height:14px;color:#000;letter-spacing:-0.554px;">01/08/12</span>
<span style="left:157.68px;top:843.00px;font-size:10.5px;line-height:14px;color:#000;letter-spacing:-0.57px;">2012</span>
<span style="left:205.71px;top:843.00px;font-size:10.5px;line-height:14px;color:#000;">-17</span>
<div class="row" style="top:843.7px"><b class="d">-</b><b class="d">-</b><b class="d">-</b><b class="d">-</b><b class="d">-</b><b class="d">-</b><b class="d">-</b><b class="d">-</b><b class="d">-</b><b class="d">-</b><b class="d">-</b><b class="d">-</b><b class="d">-</b><b class="d">-</b><b class="d">-</b><b class="d">-</b><b class="d">-</b><b class="d">-</b><b class="d">-</b><b class="d">-</b><b class="d">-</b><b class="d">-</b></div>
<span style="left:100.70px;top:856.00px;font-size:10.5px;line-height:14px;color:#000;letter-spacing:-0.554px;">01/09/12</span>
<span style="left:157.68px;top:856.00px;font-size:10.5px;line-height:14px;color:#000;letter-spacing:-0.57px;">2012</span>
<span style="left:205.71px;top:856.00px;font-size:10.5px;line-height:14px;color:#000;">-16</span>
<div class="row" style="top:856.7px"><b>26.9</b><b>51.8</b><b>41.1</b><b>25.8</b><b>17.7</b><b>19.9</b><b>23.1</b><b>28.4</b><b>28.4</b><b>22.9</b><b>18.0</b><b>13.8</b><b>23.5</b><b>111.5</b><b>35.8</b><b>30.5</b><b>23.1</b><b>23.1</b><b>33.4</b><b>40.7</b><b>30.4</b><b>33.6</b></div>
<span style="left:101.47px;top:869.00px;font-size:10.5px;line-height:14px;color:#000;letter-spacing:-0.775px;">01/10/12</span>
<span style="left:157.68px;top:869.00px;font-size:10.5px;line-height:14px;color:#000;letter-spacing:-0.57px;">2012</span>
<span style="left:205.71px;top:869.00px;font-size:10.5px;line-height:14px;color:#000;">-15</span>
<div class="row" style="top:869.7px"><b class="d">-</b><b class="d">-</b><b class="d">-</b><b class="d">-</b><b class="d">-</b><b class="d">-</b><b class="d">-</b><b class="d">-</b><b class="d">-</b><b class="d">-</b><b class="d">-</b><b class="d">-</b><b class="d">-</b><b class="d">-</b><b class="d">-</b><b class="d">-</b><b class="d">-</b><b class="d">-</b><b class="d">-</b><b class="d">-</b><b class="d">-</b><b class="d">-</b></div>
<span style="left:102.25px;top:882.00px;font-size:10.5px;line-height:14px;color:#000;letter-spacing:-0.885px;">01/11/12</span>
<span style="left:157.68px;top:882.00px;font-size:10.5px;line-height:14px;color:#000;letter-spacing:-0.57px;">2012</span>
<span style="left:205.71px;top:882.00px;font-size:10.5px;line-height:14px;color:#000;">-14</span>
<div class="row" style="top:882.7px"><b class="d">-</b><b class="d">-</b><b class="d">-</b><b class="d">-</b><b class="d">-</b><b class="d">-</b><b class="d">-</b><b class="d">-</b><b class="d">-</b><b class="d">-</b><b class="d">-</b><b class="d">-</b><b class="d">-</b><b class="d">-</b><b class="d">-</b><b class="d">-</b><b class="d">-</b><b class="d">-</b><b class="d">-</b><b class="d">-</b><b class="d">-</b><b class="d">-</b></div>
<span style="left:101.47px;top:895.00px;font-size:10.5px;line-height:14px;color:#000;letter-spacing:-0.775px;">01/12/12</span>
<span style="left:157.68px;top:895.00px;font-size:10.5px;line-height:14px;color:#000;letter-spacing:-0.57px;">2012</span>
<span style="left:205.71px;top:895.00px;font-size:10.5px;line-height:14px;color:#000;">-13</span>
<div class="row" style="top:895.7px"><b>65.7</b><b>184.4</b><b>131.9</b><b>121.5</b><b>48.5</b><b>41.1</b><b>39.7</b><b>42.9</b><b>47.3</b><b>58.2</b><b>51.7</b><b>58.0</b><b>96.2</b><b>707.4</b><b>192.8</b><b>129.9</b><b>68.6</b><b>61.1</b><b>67.6</b><b>59.7</b><b>58.6</b><b>83.2</b></div>
<span style="left:101.47px;top:908.00px;font-size:10.5px;line-height:14px;color:#000;letter-spacing:-0.775px;">01/01/13</span>
<span style="left:157.68px;top:908.00px;font-size:10.5px;line-height:14px;color:#000;letter-spacing:-0.57px;">2013</span>
<span style="left:205.71px;top:908.00px;font-size:10.5px;line-height:14px;color:#000;">-12</span>
<div class="row" style="top:908.7px"><b>77.9</b><b>219.7</b><b>174.0</b><b>131.8</b><b>100.0</b><b>100.8</b><b>115.0</b><b>102.2</b><b>121.3</b><b>110.1</b><b>94.5</b><b>109.7</b><b>167.5</b><b>761.3</b><b>272.1</b><b>235.8</b><b>141.2</b><b>132.7</b><b>166.5</b><b>155.5</b><b>166.2</b><b>136.4</b></div>
<span style="left:100.70px;top:921.00px;font-size:10.5px;line-height:14px;color:#000;letter-spacing:-0.554px;">01/02/13</span>
<span style="left:157.68px;top:921.00px;font-size:10.5px;line-height:14px;color:#000;letter-spacing:-0.57px;">2013</span>
<span style="left:206.10px;top:921.00px;font-size:10.5px;line-height:14px;color:#000;">-11</span>
<div class="row" style="top:921.7px"><b>60.3</b><b>136.5</b><b>96.8</b><b>88.0</b><b>79.6</b><b>64.1</b><b>66.7</b><b>83.8</b><b>75.7</b><b>88.2</b><b>74.2</b><b>79.0</b><b>97.4</b><b>328.4</b><b>137.2</b><b>113.8</b><b>99.1</b><b>100.4</b><b>95.6</b><b>90.7</b><b>109.4</b><b>122.8</b></div>
<span style="left:100.70px;top:934.00px;font-size:10.5px;line-height:14px;color:#000;letter-spacing:-0.554px;">01/03/13</span>
<span style="left:157.68px;top:934.00px;font-size:10.5px;line-height:14px;color:#000;letter-spacing:-0.57px;">2013</span>
<span style="left:205.71px;top:934.00px;font-size:10.5px;line-height:14px;color:#000;">-10</span>
<div class="row" style="top:934.7px"><b class="d">-</b><b class="d">-</b><b class="d">-</b><b class="d">-</b><b class="d">-</b><b class="d">-</b><b class="d">-</b><b class="d">-</b><b class="d">-</b><b class="d">-</b><b class="d">-</b><b class="d">-</b><b class="d">-</b><b class="d">-</b><b class="d">-</b><b class="d">-</b><b class="d">-</b><b class="d">-</b><b class="d">-</b><b class="d">-</b><b class="d">-</b><b class="d">-</b></div>
<span style="left:100.70px;top:947.00px;font-size:10.5px;line-height:14px;color:#000;letter-spacing:-0.554px;">01/04/13</span>
<span style="left:157.68px;top:947.00px;font-size:10.5px;line-height:14px;color:#000;letter-spacing:-0.57px;">2013</span>
<span style="left:208.63px;top:947.00px;font-size:10.5px;line-height:14px;color:#000;">-9</span>
<div class="row" style="top:947.7px"><b>15.2</b><b>25.3</b><b>21.9</b><b>23.3</b><b>22.7</b><b>24.2</b><b>20.5</b><b>28.1</b><b>36.1</b><b>41.1</b><b>35.7</b><b>38.1</b><b>45.7</b><b>78.5</b><b>40.2</b><b>32.3</b><b>43.0</b><b>45.6</b><b>46.0</b><b>47.5</b><b>44.5</b><b>54.3</b></div>
<span style="left:100.70px;top:960.00px;font-size:10.5px;line-height:14px;color:#000;letter-spacing:-0.554px;">01/05/13</span>
<span style="left:157.68px;top:960.00px;font-size:10.5px;line-height:14px;color:#000;letter-spacing:-0.57px;">2013</span>
<span style="left:208.63px;top:960.00px;font-size:10.5px;line-height:14px;color:#000;">-8</span>
<div class="row" style="top:960.7px"><b>35.2</b><b>116.0</b><b>86.4</b><b>78.6</b><b>54.5</b><b>77.3</b><b>73.5</b><b>91.5</b><b>96.1</b><b>87.1</b><b>77.6</b><b>60.7</b><b>77.1</b><b>307.1</b><b>129.0</b><b>100.2</b><b>94.6</b><b>95.8</b><b>102.7</b><b>107.3</b><b>113.4</b><b>147.6</b></div>
<span style="left:100.70px;top:973.00px;font-size:10.5px;line-height:14px;color:#000;letter-spacing:-0.554px;">01/06/13</span>
<span style="left:157.68px;top:973.00px;font-size:10.5px;line-height:14px;color:#000;letter-spacing:-0.57px;">2013</span>
<span style="left:208.63px;top:973.00px;font-size:10.5px;line-height:14px;color:#000;">-7</span>
<div class="row" style="top:973.7px"><b>30.8</b><b>65.9</b><b>73.1</b><b>58.0</b><b>64.7</b><b>52.5</b><b>50.5</b><b>60.9</b><b>59.6</b><b>54.7</b><b>48.2</b><b>53.4</b><b>62.1</b><b>227.9</b><b>97.5</b><b>75.2</b><b>60.8</b><b>74.5</b><b>75.7</b><b>90.9</b><b>110.4</b><b>100.9</b></div>
<span style="left:100.70px;top:986.00px;font-size:10.5px;line-height:14px;color:#000;letter-spacing:-0.554px;">01/07/13</span>
<span style="left:157.68px;top:986.00px;font-size:10.5px;line-height:14px;color:#000;letter-spacing:-0.57px;">2013</span>
<span style="left:208.63px;top:986.00px;font-size:10.5px;line-height:14px;color:#000;">-6</span>
<div class="row" style="top:986.7px"><b>44.5</b><b>75.0</b><b>71.8</b><b>47.6</b><b>34.8</b><b>42.5</b><b>37.0</b><b>38.3</b><b>42.9</b><b>57.9</b><b>51.6</b><b>49.8</b><b>57.6</b><b>242.5</b><b>89.4</b><b>84.8</b><b>66.2</b><b>61.4</b><b>60.9</b><b>64.7</b><b>61.8</b><b>76.3</b></div>
<span style="left:100.70px;top:999.00px;font-size:10.5px;line-height:14px;color:#000;letter-spacing:-0.554px;">01/08/13</span>
<span style="left:157.68px;top:999.00px;font-size:10.5px;line-height:14px;color:#000;letter-spacing:-0.57px;">2013</span>
<span style="left:208.63px;top:999.00px;font-size:10.5px;line-height:14px;color:#000;">-5</span>
<div class="row" style="top:999.7px"><b>84.2</b><b>204.5</b><b>110.5</b><b>74.9</b><b>75.3</b><b>62.5</b><b>64.6</b><b>84.4</b><b>89.4</b><b>74.3</b><b>60.8</b><b>76.1</b><b>112.5</b><b>427.7</b><b>143.1</b><b>145.1</b><b>85.2</b><b>102.1</b><b>114.6</b><b>99.4</b><b>108.9</b><b>124.5</b></div>
<span style="left:100.70px;top:1012.00px;font-size:10.5px;line-height:14px;color:#000;letter-spacing:-0.554px;">01/09/13</span>
<span style="left:157.68px;top:1012.00px;font-size:10.5px;line-height:14px;color:#000;letter-spacing:-0.57px;">2013</span>
<span style="left:208.63px;top:1012.00px;font-size:10.5px;line-height:14px;color:#000;">-4</span>
<div class="row" style="top:1012.7px"><b><i>-</i>6.3</b><b>7.7</b><b>9.7</b><b>10.5</b><b>2.2</b><b>4.1</b><b>1.9</b><b>10.6</b><b>10.4</b><b>17.9</b><b>20.7</b><b>16.3</b><b>11.8</b><b>117.5</b><b>23.7</b><b>24.4</b><b>19.3</b><b>20.4</b><b>16.0</b><b>16.3</b><b>23.3</b><b>26.7</b></div>
<span style="left:101.47px;top:1025.00px;font-size:10.5px;line-height:14px;color:#000;letter-spacing:-0.775px;">01/10/13</span>
<span style="left:157.68px;top:1025.00px;font-size:10.5px;line-height:14px;color:#000;letter-spacing:-0.57px;">2013</span>
<span style="left:208.63px;top:1025.00px;font-size:10.5px;line-height:14px;color:#000;">-3</span>
<div class="row" style="top:1025.7px"><b>3.9</b><b>52.2</b><b>35.8</b><b>33.1</b><b>1.7</b><b>10.2</b><b>9.4</b><b>8.2</b><b>9.4</b><b>26.2</b><b>33.5</b><b>32.8</b><b>54.5</b><b>316.1</b><b>112.8</b><b>100.8</b><b>42.9</b><b>44.0</b><b>59.3</b><b>71.9</b><b>57.7</b><b>58.2</b></div>
<span style="left:102.25px;top:1038.00px;font-size:10.5px;line-height:14px;color:#000;letter-spacing:-0.885px;">01/11/13</span>
<span style="left:157.68px;top:1038.00px;font-size:10.5px;line-height:14px;color:#000;letter-spacing:-0.57px;">2013</span>
<span style="left:208.63px;top:1038.00px;font-size:10.5px;line-height:14px;color:#000;">-2</span>
<div class="row" style="top:1038.7px"><b>8.3</b><b>37.3</b><b>51.5</b><b>51.4</b><b>49.3</b><b>40.5</b><b>56.5</b><b>54.7</b><b>48.4</b><b>66.8</b><b>57.2</b><b>49.0</b><b>90.4</b><b>287.0</b><b>144.0</b><b>146.4</b><b>95.4</b><b>112.5</b><b>102.9</b><b>103.1</b><b>100.7</b><b>119.4</b></div>
<span style="left:101.47px;top:1051.00px;font-size:10.5px;line-height:14px;color:#000;letter-spacing:-0.775px;">01/12/13</span>
<span style="left:157.68px;top:1051.00px;font-size:10.5px;line-height:14px;color:#000;letter-spacing:-0.57px;">2013</span>
<span style="left:208.63px;top:1051.00px;font-size:10.5px;line-height:14px;color:#000;">-1</span>
<div class="row" style="top:1051.7px"><b><i>-</i>2.8</b><b>31.2</b><b>34.1</b><b>51.2</b><b>48.7</b><b>48.0</b><b>69.6</b><b>71.6</b><b>80.0</b><b>94.7</b><b>74.8</b><b>74.9</b><b>86.8</b><b>282.3</b><b>135.1</b><b>127.2</b><b>82.8</b><b>96.2</b><b>110.7</b><b>119.6</b><b>109.1</b><b>116.3</b></div>
<span style="left:101.47px;top:1064.00px;font-size:10.5px;line-height:14px;color:#0000d4;letter-spacing:-0.775px;">01/01/14</span>
<span style="left:157.68px;top:1064.00px;font-size:10.5px;line-height:14px;color:#000;letter-spacing:-0.57px;">2014</span>
<div class="row" style="top:1064.7px"><b><i>-</i>31.6</b><b>22.5</b><b>26.0</b><b>51.0</b><b>42.4</b><b>21.6</b><b>22.2</b><b>39.5</b><b>31.8</b><b>52.5</b><b>31.3</b><b>44.7</b><b>40.9</b><b>206.8</b><b>84.8</b><b>95.5</b><b>77.0</b><b>70.0</b><b>83.4</b><b>75.3</b><b>69.6</b><b>82.4</b></div>
<span style="left:100.70px;top:1077.00px;font-size:10.5px;line-height:14px;color:#000;letter-spacing:-0.554px;">01/02/14</span>
<span style="left:157.68px;top:1077.00px;font-size:10.5px;line-height:14px;color:#000;letter-spacing:-0.57px;">2014</span>
<span style="left:210.38px;top:1077.00px;font-size:10.5px;line-height:14px;color:#000;">1</span>
<div class="row" style="top:1077.7px"><b><i>-</i>8.0</b><b>5.6</b><b>30.4</b><b>54.4</b><b>53.1</b><b>57.9</b><b>54.4</b><b>56.7</b><b>51.5</b><b>55.1</b><b>45.2</b><b>47.0</b><b>66.1</b><b>292.4</b><b>114.5</b><b>88.5</b><b>82.5</b><b>69.1</b><b>72.2</b><b>79.8</b><b>81.6</b><b>83.7</b></div>
<span style="left:100.70px;top:1090.00px;font-size:10.5px;line-height:14px;color:#000;letter-spacing:-0.554px;">01/03/14</span>
<span style="left:157.68px;top:1090.00px;font-size:10.5px;line-height:14px;color:#000;letter-spacing:-0.57px;">2014</span>
<span style="left:210.38px;top:1090.00px;font-size:10.5px;line-height:14px;color:#000;">2</span>
<div class="row" style="top:1090.7px"><b><i>-</i>16.0</b><b><i>-</i>16.0</b><b><i>-</i>0.1</b><b>13.2</b><b>18.0</b><b>21.8</b><b>25.7</b><b>38.7</b><b>15.4</b><b>32.8</b><b>34.0</b><b>41.0</b><b>35.9</b><b>148.5</b><b>50.3</b><b>50.4</b><b>41.9</b><b>42.8</b><b>31.5</b><b>40.5</b><b>43.7</b><b>44.9</b></div>
<span style="left:100.70px;top:1103.00px;font-size:10.5px;line-height:14px;color:#000;letter-spacing:-0.554px;">01/04/14</span>
<span style="left:157.68px;top:1103.00px;font-size:10.5px;line-height:14px;color:#000;letter-spacing:-0.57px;">2014</span>
<span style="left:210.38px;top:1103.00px;font-size:10.5px;line-height:14px;color:#000;">3</span>
<div class="row" style="top:1103.7px"><b class="d">-</b><b class="d">-</b><b class="d">-</b><b class="d">-</b><b class="d">-</b><b class="d">-</b><b class="d">-</b><b class="d">-</b><b class="d">-</b><b class="d">-</b><b class="d">-</b><b class="d">-</b><b class="d">-</b><b class="d">-</b><b class="d">-</b><b class="d">-</b><b class="d">-</b><b class="d">-</b><b class="d">-</b><b class="d">-</b><b class="d">-</b><b class="d">-</b></div>
<span style="left:100.70px;top:1116.00px;font-size:10.5px;line-height:14px;color:#000;letter-spacing:-0.554px;">01/05/14</span>
<span style="left:157.68px;top:1116.00px;font-size:10.5px;line-height:14px;color:#000;letter-spacing:-0.57px;">2014</span>
<span style="left:210.38px;top:1116.00px;font-size:10.5px;line-height:14px;color:#000;">4</span>
<div class="row" style="top:1116.7px"><b><i>-</i>8.0</b><b><i>-</i>8.0</b><b><i>-</i>8.0</b><b><i>-</i>8.0</b><b><i>-</i>4.9</b><b><i>-</i>1.9</b><b>1.1</b><b>8.1</b><b>12.2</b><b>11.3</b><b>7.3</b><b>9.2</b><b>8.4</b><b>37.4</b><b>19.2</b><b>32.9</b><b>35.0</b><b>33.2</b><b>33.8</b><b>42.4</b><b>39.7</b><b>40.8</b></div>
<span style="left:100.70px;top:1129.00px;font-size:10.5px;line-height:14px;color:#000;letter-spacing:-0.554px;">01/06/14</span>
<span style="left:157.68px;top:1129.00px;font-size:10.5px;line-height:14px;color:#000;letter-spacing:-0.57px;">2014</span>
<span style="left:210.38px;top:1129.00px;font-size:10.5px;line-height:14px;color:#000;">5</span>
<div class="row" style="top:1129.7px"><b><i>-</i>16.0</b><b><i>-</i>16.0</b><b><i>-</i>16.0</b><b><i>-</i>16.0</b><b><i>-</i>16.0</b><b><i>-</i>0.7</b><b>20.9</b><b>49.2</b><b>78.1</b><b>78.1</b><b>57.5</b><b>36.8</b><b>73.4</b><b>289.9</b><b>122.4</b><b>115.9</b><b>84.8</b><b>82.7</b><b>99.3</b><b>108.3</b><b>113.4</b><b>143.2</b></div>
<span style="left:100.70px;top:1142.00px;font-size:10.5px;line-height:14px;color:#000;letter-spacing:-0.554px;">01/07/14</span>
<span style="left:157.68px;top:1142.00px;font-size:10.5px;line-height:14px;color:#000;letter-spacing:-0.57px;">2014</span>
<span style="left:210.38px;top:1142.00px;font-size:10.5px;line-height:14px;color:#000;">6</span>
<div class="row" style="top:1142.7px"><b><i>-</i>48.0</b><b><i>-</i>48.0</b><b><i>-</i>48.0</b><b><i>-</i>48.0</b><b><i>-</i>48.0</b><b><i>-</i>48.0</b><b><i>-</i>19.6</b><b>39.9</b><b>55.5</b><b>57.4</b><b>69.1</b><b>48.3</b><b>92.3</b><b>463.3</b><b>172.3</b><b>136.3</b><b>114.1</b><b>130.7</b><b>120.7</b><b>134.1</b><b>163.8</b><b>172.5</b></div>
<span style="left:100.70px;top:1155.00px;font-size:10.5px;line-height:14px;color:#000;letter-spacing:-0.554px;">01/08/14</span>
<span style="left:157.68px;top:1155.00px;font-size:10.5px;line-height:14px;color:#000;letter-spacing:-0.57px;">2014</span>
<span style="left:210.38px;top:1155.00px;font-size:10.5px;line-height:14px;color:#000;">7</span>
<div class="row" style="top:1155.7px"><b class="d">-</b><b class="d">-</b><b class="d">-</b><b class="d">-</b><b class="d">-</b><b class="d">-</b><b class="d">-</b><b class="d">-</b><b class="d">-</b><b class="d">-</b><b class="d">-</b><b class="d">-</b><b class="d">-</b><b class="d">-</b><b class="d">-</b><b class="d">-</b><b class="d">-</b><b class="d">-</b><b class="d">-</b><b class="d">-</b><b class="d">-</b><b class="d">-</b></div>
<span style="left:100.70px;top:1168.00px;font-size:10.5px;line-height:14px;color:#000;letter-spacing:-0.554px;">01/09/14</span>
<span style="left:157.68px;top:1168.00px;font-size:10.5px;line-height:14px;color:#000;letter-spacing:-0.57px;">2014</span>
<span style="left:210.38px;top:1168.00px;font-size:10.5px;line-height:14px;color:#000;">8</span>
<div class="row" style="top:1168.7px"><b><i>-</i>16.0</b><b><i>-</i>16.0</b><b><i>-</i>16.0</b><b><i>-</i>16.0</b><b><i>-</i>16.0</b><b><i>-</i>16.0</b><b><i>-</i>16.0</b><b><i>-</i>16.0</b><b><i>-</i>5.4</b><b>5.2</b><b>9.4</b><b>10.5</b><b>16.9</b><b>117.8</b><b>38.0</b><b>35.7</b><b>37.9</b><b>26.5</b><b>41.5</b><b>39.5</b><b>38.6</b><b>32.7</b></div>
<span style="left:101.47px;top:1181.00px;font-size:10.5px;line-height:14px;color:#000;letter-spacing:-0.775px;">01/10/14</span>
<span style="left:157.68px;top:1181.00px;font-size:10.5px;line-height:14px;color:#000;letter-spacing:-0.57px;">2014</span>
<span style="left:210.38px;top:1181.00px;font-size:10.5px;line-height:14px;color:#000;">9</span>
<div class="row" style="top:1181.7px"><b><i>-</i>16.0</b><b><i>-</i>16.0</b><b><i>-</i>16.0</b><b><i>-</i>16.0</b><b><i>-</i>16.0</b><b><i>-</i>16.0</b><b><i>-</i>16.0</b><b><i>-</i>16.0</b><b><i>-</i>16.0</b><b><i>-</i>10.2</b><b>10.6</b><b>16.9</b><b>26.1</b><b>148.5</b><b>63.8</b><b>55.6</b><b>34.6</b><b>31.0</b><b>45.3</b><b>45.4</b><b>50.0</b><b>60.3</b></div>
<span style="left:102.25px;top:1194.00px;font-size:10.5px;line-height:14px;color:#000;letter-spacing:-0.885px;">01/11/14</span>
<span style="left:157.68px;top:1194.00px;font-size:10.5px;line-height:14px;color:#000;letter-spacing:-0.57px;">2014</span>
<span style="left:207.46px;top:1194.00px;font-size:10.5px;line-height:14px;color:#000;">10</span>
<div class="row" style="top:1194.7px"><b><i>-</i>8.0</b><b><i>-</i>8.0</b><b><i>-</i>8.0</b><b><i>-</i>8.0</b><b><i>-</i>8.0</b><b><i>-</i>8.0</b><b><i>-</i>8.0</b><b><i>-</i>8.0</b><b><i>-</i>8.0</b><b><i>-</i>8.0</b><b><i>-</i>0.3</b><b>7.7</b><b>8.5</b><b>50.0</b><b>21.1</b><b>21.6</b><b>18.6</b><b>15.4</b><b>19.3</b><b>22.0</b><b>25.1</b><b>19.8</b></div>
<span style="left:101.47px;top:1207.00px;font-size:10.5px;line-height:14px;color:#000;letter-spacing:-0.775px;">01/12/14</span>
<span style="left:157.68px;top:1207.00px;font-size:10.5px;line-height:14px;color:#000;letter-spacing:-0.57px;">2014</span>
<span style="left:207.85px;top:1207.00px;font-size:10.5px;line-height:14px;color:#000;">11</span>
<div class="row" style="top:1207.7px"><b><i>-</i>16.0</b><b><i>-</i>16.0</b><b><i>-</i>16.0</b><b><i>-</i>16.0</b><b><i>-</i>16.0</b><b><i>-</i>16.0</b><b><i>-</i>16.0</b><b><i>-</i>16.0</b><b><i>-</i>16.0</b><b><i>-</i>16.0</b><b><i>-</i>16.0</b><b><i>-</i>5.1</b><b>13.6</b><b>183.5</b><b>67.7</b><b>76.6</b><b>48.1</b><b>53.6</b><b>60.9</b><b>53.3</b><b>41.1</b><b>57.4</b></div>
<span style="left:101.47px;top:1220.00px;font-size:10.5px;line-height:14px;color:#000;letter-spacing:-0.775px;">01/01/15</span>
<span style="left:157.68px;top:1220.00px;font-size:10.5px;line-height:14px;color:#000;letter-spacing:-0.57px;">2015</span>
<span style="left:207.46px;top:1220.00px;font-size:10.5px;line-height:14px;color:#000;">12</span>
<div class="row" style="top:1220.7px"><b><i>-</i>8.0</b><b><i>-</i>8.0</b><b><i>-</i>8.0</b><b><i>-</i>8.0</b><b><i>-</i>8.0</b><b><i>-</i>8.0</b><b><i>-</i>8.0</b><b><i>-</i>8.0</b><b><i>-</i>8.0</b><b><i>-</i>8.0</b><b><i>-</i>8.0</b><b><i>-</i>8.0</b><b><i>-</i>3.2</b><b>115.2</b><b>83.8</b><b>63.2</b><b>37.3</b><b>55.1</b><b>54.9</b><b>64.3</b><b>62.7</b><b>66.1</b></div>
<span style="left:100.70px;top:1233.00px;font-size:10.5px;line-height:14px;color:#000;letter-spacing:-0.554px;">01/02/15</span>
<span style="left:157.68px;top:1233.00px;font-size:10.5px;line-height:14px;color:#000;letter-spacing:-0.57px;">2015</span>
<span style="left:207.46px;top:1233.00px;font-size:10.5px;line-height:14px;color:#000;">13</span>
<div class="row" style="top:1233.7px"><b class="d">-</b><b class="d">-</b><b class="d">-</b><b class="d">-</b><b class="d">-</b><b class="d">-</b><b class="d">-</b><b class="d">-</b><b class="d">-</b><b class="d">-</b><b class="d">-</b><b class="d">-</b><b class="d">-</b><b class="d">-</b><b class="d">-</b><b class="d">-</b><b class="d">-</b><b class="d">-</b><b class="d">-</b><b class="d">-</b><b class="d">-</b><b class="d">-</b></div>
<span style="left:100.70px;top:1246.00px;font-size:10.5px;line-height:14px;color:#000;letter-spacing:-0.554px;">01/03/15</span>
<span style="left:157.68px;top:1246.00px;font-size:10.5px;line-height:14px;color:#000;letter-spacing:-0.57px;">2015</span>
<span style="left:207.46px;top:1246.00px;font-size:10.5px;line-height:14px;color:#000;">14</span>
<div class="row" style="top:1246.7px"><b class="d">-</b><b class="d">-</b><b class="d">-</b><b class="d">-</b><b class="d">-</b><b class="d">-</b><b class="d">-</b><b class="d">-</b><b class="d">-</b><b class="d">-</b><b class="d">-</b><b class="d">-</b><b class="d">-</b><b class="d">-</b><b class="d">-</b><b class="d">-</b><b class="d">-</b><b class="d">-</b><b class="d">-</b><b class="d">-</b><b class="d">-</b><b class="d">-</b></div>
<span style="left:100.70px;top:1259.00px;font-size:10.5px;line-height:14px;color:#000;letter-spacing:-0.554px;">01/04/15</span>
<span style="left:157.68px;top:1259.00px;font-size:10.5px;line-height:14px;color:#000;letter-spacing:-0.57px;">2015</span>
<span style="left:207.46px;top:1259.00px;font-size:10.5px;line-height:14px;color:#000;">15</span>
<div class="row" style="top:1259.7px"><b class="d">-</b><b class="d">-</b><b class="d">-</b><b class="d">-</b><b class="d">-</b><b class="d">-</b><b class="d">-</b><b class="d">-</b><b class="d">-</b><b class="d">-</b><b class="d">-</b><b class="d">-</b><b class="d">-</b><b class="d">-</b><b class="d">-</b><b class="d">-</b><b class="d">-</b><b class="d">-</b><b class="d">-</b><b class="d">-</b><b class="d">-</b><b class="d">-</b></div>
<span style="left:100.70px;top:1272.00px;font-size:10.5px;line-height:14px;color:#000;letter-spacing:-0.554px;">01/05/15</span>
<span style="left:157.68px;top:1272.00px;font-size:10.5px;line-height:14px;color:#000;letter-spacing:-0.57px;">2015</span>
<span style="left:207.46px;top:1272.00px;font-size:10.5px;line-height:14px;color:#000;">16</span>
<div class="row" style="top:1272.7px"><b><i>-</i>8.0</b><b><i>-</i>8.0</b><b><i>-</i>8.0</b><b><i>-</i>8.0</b><b><i>-</i>8.0</b><b><i>-</i>8.0</b><b><i>-</i>8.0</b><b><i>-</i>8.0</b><b><i>-</i>8.0</b><b><i>-</i>8.0</b><b><i>-</i>8.0</b><b><i>-</i>8.0</b><b><i>-</i>8.0</b><b><i>-</i>8.0</b><b><i>-</i>8.0</b><b><i>-</i>8.0</b><b><i>-</i>2.4</b><b>2.5</b><b>4.9</b><b>9.1</b><b>7.7</b><b>11.3</b></div>
<span style="left:100.70px;top:1285.00px;font-size:10.5px;line-height:14px;color:#000;letter-spacing:-0.554px;">01/06/15</span>
<span style="left:157.68px;top:1285.00px;font-size:10.5px;line-height:14px;color:#000;letter-spacing:-0.57px;">2015</span>
<span style="left:207.46px;top:1285.00px;font-size:10.5px;line-height:14px;color:#000;">17</span>
<div class="row" style="top:1285.7px"><b><i>-</i>8.0</b><b><i>-</i>8.0</b><b><i>-</i>8.0</b><b><i>-</i>8.0</b><b><i>-</i>8.0</b><b><i>-</i>8.0</b><b><i>-</i>8.0</b><b><i>-</i>8.0</b><b><i>-</i>8.0</b><b><i>-</i>8.0</b><b><i>-</i>8.0</b><b><i>-</i>8.0</b><b><i>-</i>8.0</b><b><i>-</i>8.0</b><b><i>-</i>8.0</b><b><i>-</i>8.0</b><b><i>-</i>8.0</b><b>18.1</b><b>40.9</b><b>52.4</b><b>62.9</b><b>63.5</b></div>
<span style="left:100.70px;top:1298.00px;font-size:10.5px;line-height:14px;color:#000;letter-spacing:-0.554px;">01/07/15</span>
<span style="left:157.68px;top:1298.00px;font-size:10.5px;line-height:14px;color:#000;letter-spacing:-0.57px;">2015</span>
<span style="left:207.46px;top:1298.00px;font-size:10.5px;line-height:14px;color:#000;">18</span>
<div class="row" style="top:1298.7px"><b><i>-</i>48.0</b><b><i>-</i>48.0</b><b><i>-</i>48.0</b><b><i>-</i>48.0</b><b><i>-</i>48.0</b><b><i>-</i>48.0</b><b><i>-</i>48.0</b><b><i>-</i>48.0</b><b><i>-</i>48.0</b><b><i>-</i>48.0</b><b><i>-</i>48.0</b><b><i>-</i>48.0</b><b><i>-</i>48.0</b><b><i>-</i>48.0</b><b><i>-</i>48.0</b><b><i>-</i>48.0</b><b><i>-</i>48.0</b><b><i>-</i>48.0</b><b><i>-</i>3.2</b><b>69.0</b><b>143.9</b><b>142.6</b></div>
<span style="left:100.70px;top:1311.00px;font-size:10.5px;line-height:14px;color:#000;letter-spacing:-0.554px;">01/08/15</span>
<span style="left:157.68px;top:1311.00px;font-size:10.5px;line-height:14px;color:#000;letter-spacing:-0.57px;">2015</span>
<span style="left:207.46px;top:1311.00px;font-size:10.5px;line-height:14px;color:#000;">19</span>
<div class="row" style="top:1311.7px"><b><i>-</i>8.0</b><b><i>-</i>8.0</b><b><i>-</i>8.0</b><b><i>-</i>8.0</b><b><i>-</i>8.0</b><b><i>-</i>8.0</b><b><i>-</i>8.0</b><b><i>-</i>8.0</b><b><i>-</i>8.0</b><b><i>-</i>8.0</b><b><i>-</i>8.0</b><b><i>-</i>8.0</b><b><i>-</i>8.0</b><b><i>-</i>8.0</b><b><i>-</i>8.0</b><b><i>-</i>8.0</b><b><i>-</i>8.0</b><b><i>-</i>8.0</b><b><i>-</i>8.0</b><b><i>-</i>0.8</b><b>13.4</b><b>16.2</b></div>
<span style="left:100.70px;top:1324.00px;font-size:10.5px;line-height:14px;color:#000;letter-spacing:-0.554px;">01/09/15</span>
<span style="left:157.68px;top:1324.00px;font-size:10.5px;line-height:14px;color:#000;letter-spacing:-0.57px;">2015</span>
<span style="left:207.46px;top:1324.00px;font-size:10.5px;line-height:14px;color:#000;">20</span>
<div class="row" style="top:1324.7px"><b><i>-</i>8.0</b><b><i>-</i>8.0</b><b><i>-</i>8.0</b><b><i>-</i>8.0</b><b><i>-</i>8.0</b><b><i>-</i>8.0</b><b><i>-</i>8.0</b><b><i>-</i>8.0</b><b><i>-</i>8.0</b><b><i>-</i>8.0</b><b><i>-</i>8.0</b><b><i>-</i>8.0</b><b><i>-</i>8.0</b><b><i>-</i>8.0</b><b><i>-</i>8.0</b><b><i>-</i>8.0</b><b><i>-</i>8.0</b><b><i>-</i>8.0</b><b><i>-</i>8.0</b><b><i>-</i>8.0</b><b><i>-</i>5.7</b><b><i>-</i>2.1</b></div>
<span style="left:101.47px;top:1337.00px;font-size:10.5px;line-height:14px;color:#000;letter-spacing:-0.775px;">01/10/15</span>
<span style="left:157.68px;top:1337.00px;font-size:10.5px;line-height:14px;color:#000;letter-spacing:-0.57px;">2015</span>
<span style="left:207.46px;top:1337.00px;font-size:10.5px;line-height:14px;color:#000;">21</span>
<div class="row" style="top:1337.7px"><b><i>-</i>24.0</b><b><i>-</i>24.0</b><b><i>-</i>24.0</b><b><i>-</i>24.0</b><b><i>-</i>24.0</b><b><i>-</i>24.0</b><b><i>-</i>24.0</b><b><i>-</i>24.0</b><b><i>-</i>24.0</b><b><i>-</i>24.0</b><b><i>-</i>24.0</b><b><i>-</i>24.0</b><b><i>-</i>24.0</b><b><i>-</i>24.0</b><b><i>-</i>24.0</b><b><i>-</i>24.0</b><b><i>-</i>24.0</b><b><i>-</i>24.0</b><b><i>-</i>24.0</b><b><i>-</i>24.0</b><b><i>-</i>24.0</b><b>22.4</b></div>
<span style="left:102.25px;top:1350.00px;font-size:10.5px;line-height:14px;color:#000;letter-spacing:-0.885px;">01/11/15</span>
<span style="left:157.68px;top:1350.00px;font-size:10.5px;line-height:14px;color:#000;letter-spacing:-0.57px;">2015</span>
<span style="left:207.46px;top:1350.00px;font-size:10.5px;line-height:14px;color:#000;">22</span>
<div class="row" style="top:1350.7px"><b><i>-</i>16.0</b><b><i>-</i>16.0</b><b><i>-</i>16.0</b><b><i>-</i>16.0</b><b><i>-</i>16.0</b><b><i>-</i>16.0</b><b><i>-</i>16.0</b><b><i>-</i>16.0</b><b><i>-</i>16.0</b><b><i>-</i>16.0</b><b><i>-</i>16.0</b><b><i>-</i>16.0</b><b><i>-</i>16.0</b><b><i>-</i>16.0</b><b><i>-</i>16.0</b><b><i>-</i>16.0</b><b><i>-</i>16.0</b><b><i>-</i>16.0</b><b><i>-</i>16.0</b><b><i>-</i>16.0</b><b><i>-</i>16.0</b><b><i>-</i>16.0</b></div>
<span style="left:101.47px;top:1363.00px;font-size:10.5px;line-height:14px;color:#000;letter-spacing:-0.775px;">01/12/15</span>
<span style="left:157.68px;top:1363.00px;font-size:10.5px;line-height:14px;color:#000;letter-spacing:-0.57px;">2015</span>
<span style="left:207.46px;top:1363.00px;font-size:10.5px;line-height:14px;color:#000;">23</span>
<div class="row" style="top:1363.7px"><b><i>-</i>8.0</b><b><i>-</i>8.0</b><b><i>-</i>8.0</b><b><i>-</i>8.0</b><b><i>-</i>8.0</b><b><i>-</i>8.0</b><b><i>-</i>8.0</b><b><i>-</i>8.0</b><b><i>-</i>8.0</b><b><i>-</i>8.0</b><b><i>-</i>8.0</b><b><i>-</i>8.0</b><b><i>-</i>8.0</b><b><i>-</i>8.0</b><b><i>-</i>8.0</b><b><i>-</i>8.0</b><b><i>-</i>8.0</b><b><i>-</i>8.0</b><b><i>-</i>8.0</b><b><i>-</i>8.0</b><b><i>-</i>8.0</b><b><i>-</i>8.0</b></div>
</div>
</body></html>
